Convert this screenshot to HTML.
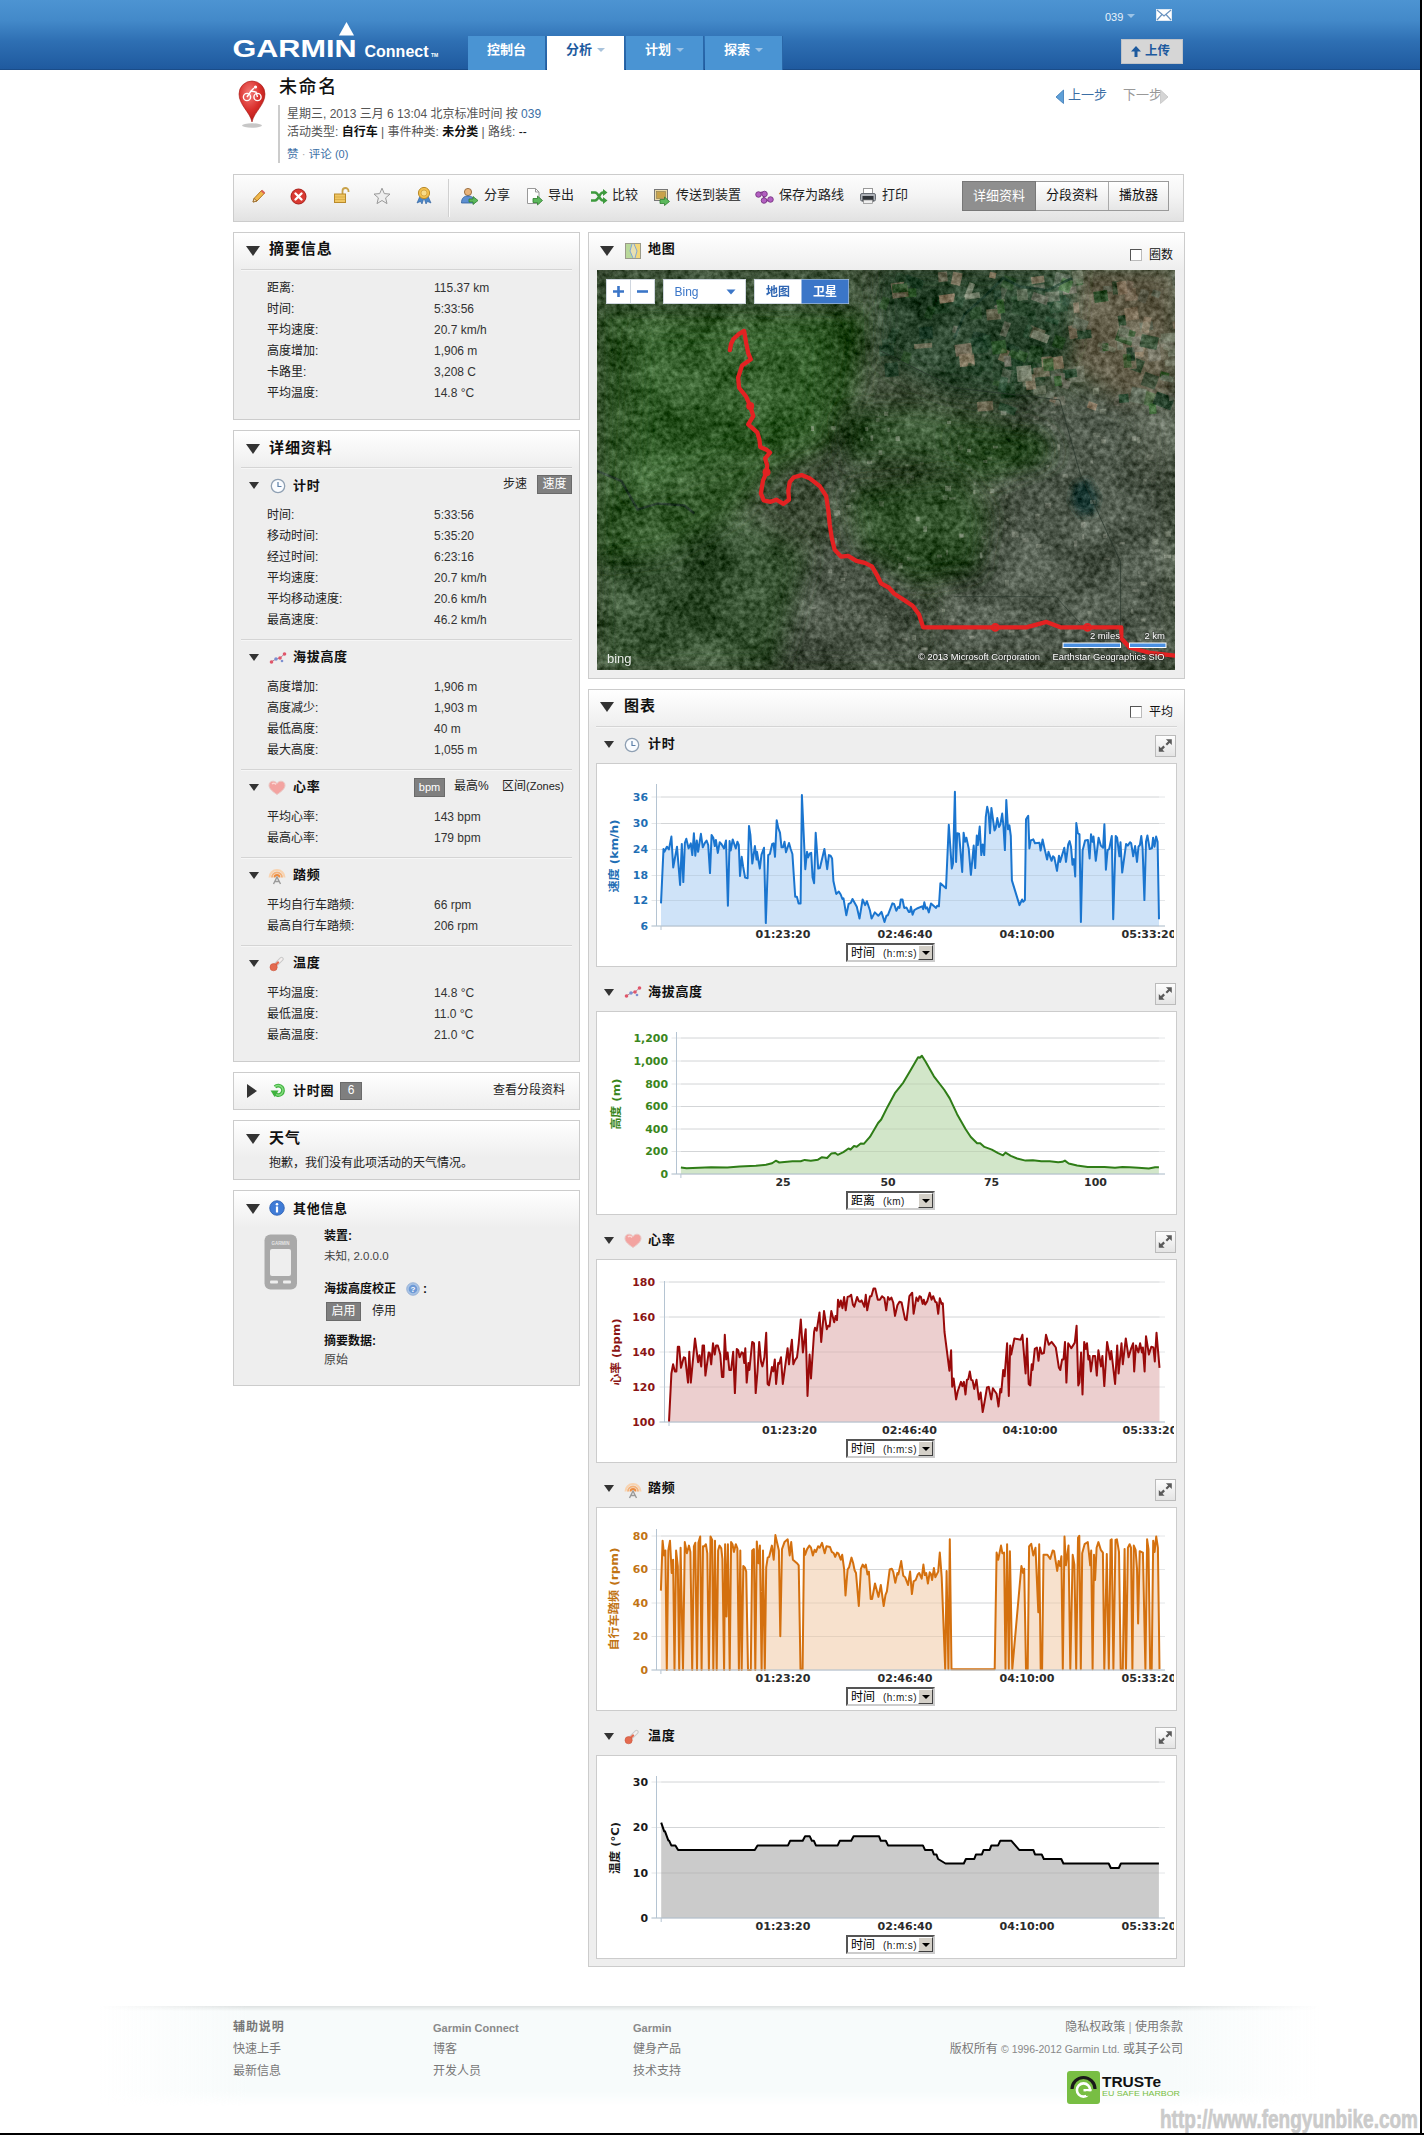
<!DOCTYPE html>
<html lang="zh-CN">
<head>
<meta charset="utf-8">
<title>Garmin Connect - 未命名</title>
<style>
*{box-sizing:border-box;margin:0;padding:0}
html,body{width:1424px;height:2135px;overflow:hidden;background:#fff}
body{font-family:"Liberation Sans","Noto Sans CJK SC",sans-serif;font-size:12px;color:#222;position:relative}
#page{position:absolute;left:0;top:0;width:1424px;height:2135px;overflow:hidden;background:#fff}
.abs{position:absolute}
a{color:#3b6ea5;text-decoration:none}
#hdr{position:absolute;left:0;top:0;width:1420px;height:70px;background:linear-gradient(#4d94d2 0%,#4389c9 30%,#2e6fb3 60%,#1f5a9f 100%);border-bottom:1px solid #1a4c88}
.tab{position:absolute;top:36px;height:34px;width:78px;background:#4a94d3;color:#fff;font-weight:bold;font-size:13px;line-height:28px;text-align:center;border-right:1px solid #2a67a8}
.tab.on{background:#fff;color:#1d5a9e}
.tab i{display:inline-block;width:0;height:0;border:4px solid transparent;border-top:4px solid #9cc3e6;border-bottom:0;margin-left:5px;vertical-align:2px}
.tab.on i{border-top-color:#a9c3dc}
.panel{position:absolute;background:#eee;border:1px solid #ccc}
.panel .ph{position:absolute;left:0;top:0;right:0;height:37px;background:linear-gradient(#fff,#eee)}
.h1{position:absolute;letter-spacing:0.9px;font-weight:bold;font-size:15px;color:#111;line-height:20px;white-space:nowrap}
.h2{position:absolute;letter-spacing:0.7px;font-weight:bold;font-size:13px;color:#111;line-height:18px;white-space:nowrap}
.tri{position:absolute;width:0;height:0;border-left:7px solid transparent;border-right:7px solid transparent;border-top:10px solid #333}
.tri.s{border-left-width:5px;border-right-width:5px;border-top-width:7px}
.trir{position:absolute;width:0;height:0;border-top:7px solid transparent;border-bottom:7px solid transparent;border-left:10px solid #333}
.sep{position:absolute;height:1px;background:#d4d4d4;border-bottom:1px solid #f6f6f6;box-sizing:content-box}
.row{position:absolute;left:34px;width:300px;height:16px;line-height:16px;font-size:12px;color:#222;white-space:nowrap}
.row b{position:absolute;left:167px;font-weight:normal;color:#333}
.tag{position:absolute;background:#7f7f7f;color:#fff;font-size:12px;line-height:18px;height:19px;text-align:center;border:1px solid #6a6a6a}
.t{position:absolute;white-space:nowrap;line-height:16px}
.cbox{position:absolute;left:8px;width:581px;height:204px;background:#fff;border:1px solid #ccc}
.exp{position:absolute;left:566px;width:21px;height:22px;background:linear-gradient(#fdfdfd,#e4e4e4);border:1px solid #bbb}
.dd{position:absolute;left:258px;width:89px;height:19px;background:#fff;border:2px solid #555;border-right-color:#ccc;border-bottom-color:#ccc;font-size:12px;line-height:16px;padding-left:3px;white-space:nowrap;color:#000}
.dd small{font-size:10px;margin-left:8px;color:#222;letter-spacing:0.4px}
.dd u{position:absolute;right:0;top:0;width:15px;height:15px;background:#d4d0c8;border:1px solid #fff;border-right-color:#404040;border-bottom-color:#404040;text-decoration:none}
.dd u:after{content:"";position:absolute;left:3px;top:5px;border:4px solid transparent;border-top:4px solid #000;border-bottom:0}
.ft{position:absolute;font-size:11px;color:#666;white-space:nowrap;line-height:14px}
.chk{position:absolute;width:12px;height:12px;background:#fff;border:1px solid #555;border-right-color:#bbb;border-bottom-color:#bbb}
svg text{font-family:"DejaVu Sans","Noto Sans CJK SC",sans-serif}
</style>
</head>
<body>
<div id="page">
<div id="hdr">
<svg class="abs" style="left:228px;top:18px" width="220" height="46" viewBox="0 0 220 46">
<polygon points="118.5,4 111,17.5 126,17.5" fill="#fff"/>
<text x="4.5" y="39" font-size="24" font-weight="bold" fill="#fff" textLength="124" lengthAdjust="spacingAndGlyphs" style="font-family:'Liberation Sans',sans-serif">GARMIN</text>
<text x="136.5" y="39" font-size="16" font-weight="bold" fill="#fff" textLength="64" lengthAdjust="spacingAndGlyphs" style="font-family:'Liberation Sans',sans-serif">Connect</text>
<text x="203" y="39" font-size="5" font-weight="bold" fill="#fff" style="font-family:'Liberation Sans',sans-serif">TM</text>
</svg>
<div class="tab" style="left:468px">控制台</div>
<div class="tab on" style="left:547px">分析<i></i></div>
<div class="tab" style="left:626px">计划<i></i></div>
<div class="tab" style="left:705px">探索<i></i></div>
<div class="t" style="left:1105px;top:9px;color:#e8f1fa;font-size:11px">039</div>
<div class="abs" style="left:1127px;top:14px;width:0;height:0;border:4px solid transparent;border-top:4px solid #9cc3e6;border-bottom:0"></div>
<svg class="abs" style="left:1156px;top:9px" width="16" height="12" viewBox="0 0 16 12"><rect x="0.5" y="0.5" width="15" height="11" fill="#fff" stroke="#dfe9f3"/><path d="M1 1 L8 7 L15 1 M1 11 L6 5.5 M15 11 L10 5.5" stroke="#6a93c0" stroke-width="1.2" fill="none"/></svg>
<div class="abs" style="left:1121px;top:39px;width:62px;height:25px;background:#d6d6d6;border:1px solid #bfc3c8;color:#1d5a9e;font-weight:bold;font-size:12.5px;line-height:22px;padding-left:23px">上传</div>
<svg class="abs" style="left:1130px;top:45px" width="12" height="13" viewBox="0 0 12 13"><path d="M6 1 L1 6.5 H4.5 V12 H7.5 V6.5 H11 Z" fill="#1d5a9e"/></svg>
</div>
<svg class="abs" style="left:234px;top:78px" width="36" height="52" viewBox="0 0 36 52">
<defs><radialGradient id="pg" cx="40%" cy="30%" r="75%"><stop offset="0" stop-color="#f47c78"/><stop offset="0.55" stop-color="#d9302c"/><stop offset="1" stop-color="#b01713"/></radialGradient></defs>
<ellipse cx="18" cy="47.5" rx="10" ry="2.2" fill="#999" opacity="0.55"/>
<path d="M18 44 C16 34 5 27 5 16 A13 13 0 0 1 31 16 C31 27 20 34 18 44Z" fill="url(#pg)" stroke="#a51a16" stroke-width="0.6"/>
<circle cx="13" cy="19" r="3.6" fill="none" stroke="#fff" stroke-width="1.4"/><circle cx="23.5" cy="19" r="3.6" fill="none" stroke="#fff" stroke-width="1.4"/>
<path d="M13 19 L17 13 L22 14 L23.5 19 M17 13 L20 10" stroke="#fff" stroke-width="1.4" fill="none"/><circle cx="21.5" cy="9" r="1.6" fill="#fff"/>
</svg>
<div class="t" style="left:279px;top:74px;font-size:18px;line-height:26px;font-weight:500;color:#111;letter-spacing:1.6px">未命名</div>
<div class="abs" style="left:278px;top:105px;width:2px;height:58px;background:#ccc"></div>
<div class="t" style="left:287px;top:106px;color:#555">星期三, 2013 三月 6 13:04 北京标准时间 按 <a>039</a></div>
<div class="t" style="left:287px;top:124px;color:#555">活动类型: <b style="color:#111">自行车</b> | 事件种类: <b style="color:#111">未分类</b> | 路线: <span style="color:#111">--</span></div>
<div class="t" style="left:287px;top:146px;color:#3b6ea5;font-size:11.5px">赞 <span style="color:#aaa">·</span> 评论 <span style="font-size:11px">(0)</span></div>
<svg class="abs" style="left:1055px;top:89px" width="10" height="15" viewBox="0 0 10 15"><path d="M8.5 1 L1 8 L8.5 14.5Z" fill="#5fa0d8" stroke="#3b78b5" stroke-width="0.8"/></svg>
<div class="t" style="left:1068px;top:87px;font-size:13px;color:#3b6ea5">上一步</div>
<div class="t" style="left:1123px;top:87px;font-size:13px;color:#999">下一步</div>
<svg class="abs" style="left:1159px;top:89px" width="10" height="15" viewBox="0 0 10 15"><path d="M1.5 1 L9 8 L1.5 14.5Z" fill="#d5d5d5" stroke="#c4c4c4" stroke-width="0.8"/></svg>
<div class="abs" style="left:233px;top:174px;width:951px;height:48px;border:1px solid #ccc;background:linear-gradient(#fdfdfd,#f4f4f4 45%,#e2e2e2)"></div>
<div class="abs" style="left:448px;top:179px;width:1px;height:38px;background:#d0d0d0;border-right:1px solid #fafafa;box-sizing:content-box"></div>
<!-- pencil -->
<svg class="abs" style="left:250px;top:188px" width="17" height="17" viewBox="0 0 17 17"><path d="M3 14 L4 10.5 L11.5 2.5 L14.5 5.2 L7 13 Z" fill="#f2b84b" stroke="#a86f1a" stroke-width="0.9"/><path d="M3 14 L4 10.5 L7 13Z" fill="#f6dfb8" stroke="#8a5a1a" stroke-width="0.7"/><path d="M11.5 2.5 L14.5 5.2" stroke="#d8605a" stroke-width="2"/></svg>
<!-- red x -->
<svg class="abs" style="left:290px;top:188px" width="17" height="17" viewBox="0 0 17 17"><circle cx="8.5" cy="8.5" r="7.5" fill="#d93a32" stroke="#a81e18"/><path d="M5.5 5.5 L11.5 11.5 M11.5 5.5 L5.5 11.5" stroke="#fff" stroke-width="2.4" stroke-linecap="round"/></svg>
<!-- lock -->
<svg class="abs" style="left:333px;top:186px" width="18" height="18" viewBox="0 0 18 18"><path d="M9.5 8 V5 A3 3 0 0 1 15.5 5 V6" fill="none" stroke="#c9a24a" stroke-width="1.8"/><rect x="1.5" y="8" width="11" height="8.5" fill="#f0c662" stroke="#b98a2a"/><path d="M2 11 H12 M2 13.5 H12" stroke="#d4a843" stroke-width="0.8"/></svg>
<!-- star -->
<svg class="abs" style="left:373px;top:187px" width="18" height="18" viewBox="0 0 18 18"><path d="M9 1.2 L11.3 6.6 L17 7.1 L12.6 10.9 L14 16.6 L9 13.5 L4 16.6 L5.4 10.9 L1 7.1 L6.7 6.6Z" fill="#eee" stroke="#999" stroke-width="1"/></svg>
<!-- ribbon -->
<svg class="abs" style="left:415px;top:186px" width="18" height="19" viewBox="0 0 18 19"><path d="M5 10 L2 17 L5.5 15.5 L7 18 L9 12 L11 18 L12.500 15.500 L16 17 L13 10Z" fill="#4a86c8" stroke="#2d5e9a" stroke-width="0.6"/><circle cx="9" cy="7" r="5.6" fill="#f3c04c" stroke="#b98a2a"/><circle cx="9" cy="7" r="3" fill="#f8dc8a" stroke="#c9993a" stroke-width="0.7"/></svg>
<!-- share -->
<svg class="abs" style="left:460px;top:187px" width="19" height="18" viewBox="0 0 19 18"><circle cx="8" cy="5" r="3.6" fill="#e8b37a" stroke="#8a5a2a" stroke-width="0.8"/><path d="M1.5 16 C1.500 11 4 9 8 9 C12 9 14.5 11 14.5 16Z" fill="#5d8fd1" stroke="#2f5f9f" stroke-width="0.8"/><path d="M9 12 H13 V9.500 L18 13.500 L13 17.500 V15 H9Z" fill="#5cb85c" stroke="#2f7d2f" stroke-width="0.8"/></svg>
<div class="t" style="left:484px;top:187px;font-size:13px;color:#222">分享</div>
<!-- export -->
<svg class="abs" style="left:526px;top:187px" width="18" height="19" viewBox="0 0 18 19"><path d="M1.5 1.500 H9.500 L13 5 V16.500 H1.500Z" fill="#fff" stroke="#999"/><path d="M9.5 1.500 V5 H13" fill="none" stroke="#999"/><path d="M7 11.500 H11.500 V9 L16.500 13.500 L11.500 18 V15.500 H7Z" fill="#5cb85c" stroke="#2f7d2f" stroke-width="0.8"/></svg>
<div class="t" style="left:548px;top:187px;font-size:13px;color:#222">导出</div>
<!-- compare -->
<svg class="abs" style="left:590px;top:188px" width="18" height="17" viewBox="0 0 18 17"><path d="M1 4.500 H5 C9 4.500 9 12.500 13 12.500 H14 M1 12.500 H5 C9 12.500 9 4.500 13 4.500 H14" fill="none" stroke="#3d9a3d" stroke-width="2.6"/><path d="M13 1 L17.500 4.500 L13 8Z M13 9 L17.500 12.500 L13 16Z" fill="#3d9a3d"/></svg>
<div class="t" style="left:612px;top:187px;font-size:13px;color:#222">比较</div>
<!-- send -->
<svg class="abs" style="left:653px;top:187px" width="18" height="19" viewBox="0 0 18 19"><rect x="1.500" y="2.500" width="13" height="11" fill="#e9d9a6" stroke="#777"/><rect x="3.500" y="4.500" width="9" height="7" fill="#c8a24a" stroke="#8a7a4a" stroke-width="0.6"/><path d="M7 12.500 H11.500 V10 L16.500 14.500 L11.500 18.500 V16.500 H7Z" fill="#5cb85c" stroke="#2f7d2f" stroke-width="0.8"/></svg>
<div class="t" style="left:676px;top:187px;font-size:13px;color:#222">传送到装置</div>
<!-- route -->
<svg class="abs" style="left:755px;top:189px" width="19" height="15" viewBox="0 0 19 15"><path d="M3.500 5 C8 1 10 5 9 7.500 C8 11 12 13 15 10.500" fill="none" stroke="#8d3f9a" stroke-width="1.6"/><circle cx="3.500" cy="5.500" r="2.800" fill="#b25fc0" stroke="#6f2a7a" stroke-width="0.8"/><circle cx="9.500" cy="5" r="2.800" fill="#b25fc0" stroke="#6f2a7a" stroke-width="0.8"/><circle cx="9" cy="11.500" r="2.800" fill="#b25fc0" stroke="#6f2a7a" stroke-width="0.8"/><circle cx="15.500" cy="10.500" r="2.800" fill="#b25fc0" stroke="#6f2a7a" stroke-width="0.800"/></svg>
<div class="t" style="left:779px;top:187px;font-size:13px;color:#222">保存为路线</div>
<!-- print -->
<svg class="abs" style="left:859px;top:187px" width="18" height="18" viewBox="0 0 18 18"><rect x="4.500" y="1.500" width="9" height="6" fill="#fff" stroke="#999"/><rect x="1.500" y="6.500" width="15" height="7.500" rx="1.500" fill="#aeb2b8" stroke="#676c73"/><rect x="3.500" y="9" width="11" height="5.500" fill="#2f3338"/><rect x="4.500" y="13" width="9" height="3.500" fill="#eee" stroke="#888" stroke-width="0.7"/></svg>
<div class="t" style="left:882px;top:187px;font-size:13px;color:#222">打印</div>
<!-- view buttons -->
<div class="abs" style="left:962px;top:181px;width:207px;height:30px;border:1px solid #9a9a9a;background:linear-gradient(#fff,#e6e6e6)"></div>
<div class="abs" style="left:962px;top:181px;width:74px;height:30px;background:#8f8f8f;border:1px solid #777;color:#fff;font-size:13px;line-height:27px;text-align:center">详细资料</div>
<div class="abs" style="left:1036px;top:182px;width:72px;height:28px;color:#111;font-size:13px;line-height:25px;text-align:center">分段资料</div>
<div class="abs" style="left:1108px;top:182px;width:1px;height:28px;background:#aaa"></div>
<div class="abs" style="left:1109px;top:182px;width:59px;height:28px;color:#111;font-size:13px;line-height:25px;text-align:center">播放器</div>
<div class="panel" style="left:233px;top:232px;width:347px;height:188px"><div class="ph" style="height:37px"></div></div>
<div class="tri" style="left:246px;top:246px"></div>
<div class="h1" style="left:269px;top:239px">摘要信息</div>
<div class="sep" style="left:241px;top:269px;width:331px"></div>
<div class="row" style="left:267px;top:280px">距离:<b>115.37 km</b></div>
<div class="row" style="left:267px;top:301px">时间:<b>5:33:56</b></div>
<div class="row" style="left:267px;top:322px">平均速度:<b>20.7 km/h</b></div>
<div class="row" style="left:267px;top:343px">高度增加:<b>1,906 m</b></div>
<div class="row" style="left:267px;top:364px">卡路里:<b>3,208 C</b></div>
<div class="row" style="left:267px;top:385px">平均温度:<b>14.8 °C</b></div>
<div class="panel" style="left:233px;top:430px;width:347px;height:632px"><div class="ph" style="height:37px"></div></div>
<div class="tri" style="left:246px;top:444px"></div>
<div class="h1" style="left:269px;top:438px">详细资料</div>
<div class="sep" style="left:241px;top:467px;width:331px"></div>
<div class="tri s" style="left:249px;top:482px"></div>
<svg class="abs" style="left:270px;top:478px" width="16" height="16" viewBox="0 0 16 16"><circle cx="8" cy="8" r="6.700" fill="#fafcff" stroke="#8fa0b3" stroke-width="1.300"/><path d="M8 4 V8.500 H11.500" fill="none" stroke="#5b7fa8" stroke-width="1.200"/></svg>
<div class="h2" style="left:293px;top:476.5px">计时</div>
<div class="t" style="left:503px;top:476px;color:#222">步速</div>
<div class="tag" style="left:537px;top:475px;width:35px;height:19px;line-height:16px">速度</div>
<div class="row" style="left:267px;top:507px">时间:<b>5:33:56</b></div>
<div class="row" style="left:267px;top:528px">移动时间:<b>5:35:20</b></div>
<div class="row" style="left:267px;top:549px">经过时间:<b>6:23:16</b></div>
<div class="row" style="left:267px;top:570px">平均速度:<b>20.7 km/h</b></div>
<div class="row" style="left:267px;top:591px">平均移动速度:<b>20.6 km/h</b></div>
<div class="row" style="left:267px;top:612px">最高速度:<b>46.2 km/h</b></div>
<div class="sep" style="left:241px;top:639px;width:331px"></div>
<div class="tri s" style="left:249px;top:654px"></div>
<svg class="abs" style="left:269px;top:651px" width="18" height="14" viewBox="0 0 18 14"><path d="M2 11 L7 8 L11 7 L16 2.500" fill="none" stroke="#b58a9a" stroke-width="1"/><circle cx="2.500" cy="11" r="1.800" fill="#e0566a"/><circle cx="7" cy="8" r="1.800" fill="#7d8fd0"/><circle cx="11" cy="7" r="1.800" fill="#e0566a"/><circle cx="15.500" cy="3" r="1.800" fill="#e0566a"/><circle cx="13" cy="10" r="1.300" fill="#7d8fd0"/></svg>
<div class="h2" style="left:293px;top:647.5px">海拔高度</div>
<div class="row" style="left:267px;top:679px">高度增加:<b>1,906 m</b></div>
<div class="row" style="left:267px;top:700px">高度减少:<b>1,903 m</b></div>
<div class="row" style="left:267px;top:721px">最低高度:<b>40 m</b></div>
<div class="row" style="left:267px;top:742px">最大高度:<b>1,055 m</b></div>
<div class="sep" style="left:241px;top:769px;width:331px"></div>
<div class="tri s" style="left:249px;top:784px"></div>
<svg class="abs" style="left:268px;top:780px" width="18" height="16" viewBox="0 0 18 16"><path d="M9 14.500 C3 10.500 1 8 1 5.200 C1 2.800 2.800 1.200 5 1.200 C6.800 1.200 8.200 2.200 9 3.600 C9.800 2.200 11.200 1.200 13 1.200 C15.200 1.200 17 2.800 17 5.200 C17 8 15 10.500 9 14.500Z" fill="#f3a3a0" stroke="#e9c7c4" stroke-width="1"/><path d="M4 4 C5 3 7 3 8 4.500" fill="none" stroke="#fbd5d2" stroke-width="1.500"/></svg>
<div class="h2" style="left:293px;top:777.5px">心率</div>
<div class="tag" style="left:414px;top:778px;width:31px;height:19px;line-height:16px"><span style="font-size:11px">bpm</span></div>
<div class="t" style="left:454px;top:778px;color:#222">最高%</div>
<div class="t" style="left:502px;top:778px;color:#222">区间<span style="font-size:11px">(Zones)</span></div>
<div class="row" style="left:267px;top:809px">平均心率:<b>143 bpm</b></div>
<div class="row" style="left:267px;top:830px">最高心率:<b>179 bpm</b></div>
<div class="sep" style="left:241px;top:857px;width:331px"></div>
<div class="tri s" style="left:249px;top:872px"></div>
<svg class="abs" style="left:268px;top:867px" width="18" height="18" viewBox="0 0 18 18"><path d="M1.500 10.500 A7.500 7.500 0 0 1 16.500 10.500" fill="none" stroke="#f8d3b0" stroke-width="2"/><path d="M4 10.500 A5 5 0 0 1 14 10.500" fill="none" stroke="#f4b27a" stroke-width="2"/><path d="M6.500 10.500 A2.500 2.500 0 0 1 11.500 10.500" fill="none" stroke="#ee8b3c" stroke-width="1.800"/><path d="M5.500 17 L9 10 L12.500 17 M7 14.500 H11" fill="none" stroke="#9a9a9a" stroke-width="1.400"/></svg>
<div class="h2" style="left:293px;top:865.5px">踏频</div>
<div class="row" style="left:267px;top:897px">平均自行车踏频:<b>66 rpm</b></div>
<div class="row" style="left:267px;top:918px">最高自行车踏频:<b>206 rpm</b></div>
<div class="sep" style="left:241px;top:945px;width:331px"></div>
<div class="tri s" style="left:249px;top:960px"></div>
<svg class="abs" style="left:269px;top:956px" width="16" height="16" viewBox="0 0 16 16"><path d="M5 10.500 L12.500 3" stroke="#c9c9c9" stroke-width="4.400" stroke-linecap="round"/><path d="M5 10.500 L12.500 3" stroke="#f4efee" stroke-width="2.400" stroke-linecap="round"/><path d="M4.500 11 L9 6.500" stroke="#e46a4f" stroke-width="2.400" stroke-linecap="round"/><circle cx="4.600" cy="11.200" r="3.600" fill="#e46a4f" stroke="#c9553c" stroke-width="0.600"/></svg>
<div class="h2" style="left:293px;top:953.5px">温度</div>
<div class="row" style="left:267px;top:985px">平均温度:<b>14.8 °C</b></div>
<div class="row" style="left:267px;top:1006px">最低温度:<b>11.0 °C</b></div>
<div class="row" style="left:267px;top:1027px">最高温度:<b>21.0 °C</b></div>
<div class="panel" style="left:233px;top:1072px;width:347px;height:38px"><div class="ph" style="height:36px"></div></div>
<div class="trir" style="left:247px;top:1084px"></div>
<svg class="abs" style="left:270px;top:1082px" width="17" height="17" viewBox="0 0 17 17"><path d="M5 4.800 A4.800 4.800 0 1 1 4.400 11.200" fill="none" stroke="#3fb23f" stroke-width="3.800"/><path d="M5 4.800 A4.800 4.800 0 1 1 4.400 11.200" fill="none" stroke="#86dc80" stroke-width="1.400"/><path d="M0.600 8.600 H8.600 L4.600 15Z" fill="#3fb23f"/></svg>
<div class="h2" style="left:293px;top:1081.5px">计时圈</div>
<div class="tag" style="left:340px;top:1082px;width:22px;height:18px;line-height:15px">6</div>
<div class="t" style="left:493px;top:1082px;color:#222">查看分段资料</div>
<div class="panel" style="left:233px;top:1120px;width:347px;height:60px"><div class="ph" style="height:37px"></div></div>
<div class="tri" style="left:246px;top:1134px"></div>
<div class="h1" style="left:269px;top:1128px">天气</div>
<div class="t" style="left:269px;top:1155px;color:#222">抱歉，我们没有此项活动的天气情况。</div>
<div class="panel" style="left:233px;top:1190px;width:347px;height:196px"><div class="ph" style="height:37px"></div></div>
<div class="tri" style="left:246px;top:1204px"></div>
<svg class="abs" style="left:269px;top:1200px" width="16" height="16" viewBox="0 0 16 16"><circle cx="8" cy="8" r="7.300" fill="#3f7bd6" stroke="#2a5db0" stroke-width="0.800"/><circle cx="8" cy="4.300" r="1.300" fill="#fff"/><rect x="6.900" y="6.500" width="2.200" height="6" fill="#fff"/></svg>
<div class="h2" style="left:293px;top:1199.5px">其他信息</div>
<svg class="abs" style="left:264px;top:1234px" width="34" height="56" viewBox="0 0 34 56"><rect x="0.500" y="0.500" width="32.500" height="55" rx="6" fill="#a9a9a9"/><rect x="6" y="15" width="21" height="27" rx="2" fill="#eee"/><rect x="6" y="46.500" width="8" height="3" rx="1" fill="#eee"/><rect x="19" y="46.500" width="8" height="3" rx="1" fill="#eee"/><text x="16.500" y="11" font-size="4.500" font-weight="bold" text-anchor="middle" fill="#e4e4e4" style="font-family:'Liberation Sans',sans-serif">GARMIN</text></svg>
<div class="t" style="left:324px;top:1228px;color:#111"><b>装置:</b></div>
<div class="t" style="left:324px;top:1248px;color:#444;font-size:11.500px">未知, 2.0.0.0</div>
<div class="t" style="left:324px;top:1281px;color:#111"><b>海拔高度校正</b></div>
<svg class="abs" style="left:406px;top:1282px" width="14" height="14" viewBox="0 0 14 14"><circle cx="7" cy="7" r="6.300" fill="#a9c4e6" stroke="#8eaad0" stroke-width="0.800"/><circle cx="7" cy="7" r="4.300" fill="#6f9ad6"/><text x="7" y="10" font-size="8" font-weight="bold" text-anchor="middle" fill="#fff" style="font-family:'Liberation Sans',sans-serif">?</text></svg>
<div class="t" style="left:423px;top:1281px;color:#111"><b>:</b></div>
<div class="tag" style="left:326px;top:1302px;width:35px;height:19px;line-height:16px">启用</div>
<div class="t" style="left:372px;top:1303px;color:#222">停用</div>
<div class="t" style="left:324px;top:1333px;color:#111"><b>摘要数据:</b></div>
<div class="t" style="left:324px;top:1352px;color:#444">原始</div>
<div class="panel" style="left:588px;top:232px;width:597px;height:447px"><div class="ph" style="height:37px"></div></div>
<div class="tri" style="left:600px;top:246px"></div>
<svg class="abs" style="left:625px;top:243px" width="16" height="16" viewBox="0 0 16 16"><rect x="0.500" y="0.500" width="15" height="15" fill="#e8e0b0" stroke="#9a9a8a"/><path d="M1 1 H7 L5 8 L8 15 H1Z" fill="#b9d89a"/><path d="M9 1 L12 8 L10 15 H15 V1Z" fill="#f3d87a"/><path d="M7 1 L5 8 L8 15 M9 1 L12 8 L10 15" fill="none" stroke="#7fa6d8" stroke-width="1"/></svg>
<div class="h2" style="left:648px;top:240px">地图</div>
<div class="chk" style="left:1130px;top:249px"></div><div class="t" style="left:1149px;top:247px;color:#111">圈数</div>
<svg class="abs" style="left:597px;top:270px" width="578" height="400" viewBox="597 270 578 400">
<defs>
<filter id="b1" x="-20%" y="-20%" width="140%" height="140%"><feGaussianBlur stdDeviation="10"/></filter>
<filter id="b2" x="-20%" y="-20%" width="140%" height="140%"><feGaussianBlur stdDeviation="3"/></filter>
<filter id="b3" x="-20%" y="-20%" width="140%" height="140%"><feGaussianBlur stdDeviation="0.700"/></filter>
<filter id="tex" x="0" y="0" width="100%" height="100%" color-interpolation-filters="sRGB"><feTurbulence type="fractalNoise" baseFrequency="0.18" numOctaves="4" seed="7" result="n"/><feColorMatrix in="n" type="matrix" values="1 0 0 0 0  1 0 0 0 0  1 0 0 0 0  0 0 0 0 1" result="g"/><feComposite in="SourceGraphic" in2="g" operator="arithmetic" k1="0" k2="1" k3="0.42" k4="-0.23" result="r1"/><feTurbulence type="fractalNoise" baseFrequency="0.022" numOctaves="3" seed="21" result="n2"/><feColorMatrix in="n2" type="matrix" values="0 1 0 0 0  0 1 0 0 0  0 1 0 0 0  0 0 0 0 1" result="g2"/><feComposite in="r1" in2="g2" operator="arithmetic" k1="0" k2="1" k3="0.3" k4="-0.165"/></filter>
<clipPath id="mc"><rect x="597" y="270" width="578" height="400"/></clipPath>
</defs>
<g clip-path="url(#mc)">
<g filter="url(#tex)">
<rect x="597" y="270" width="578" height="400" fill="#46543f"/>
<polygon points="1007.0,403.9 1175.0,375.5 1175.0,669.8 921.7,669.8 938.0,590.7 994.8,517.6" fill="#566152" filter="url(#b1)" opacity="1"/>
<polygon points="1076.0,270.0 1175.0,270.0 1175.0,403.9 1124.7,403.9 1067.8,363.4" fill="#716c59" filter="url(#b1)" opacity="1"/>
<polygon points="1124.7,403.9 1175.0,403.9 1175.0,481.1 1132.8,481.1" fill="#5b6556" filter="url(#b1)" opacity="1"/>
<polygon points="759.4,594.7 848.7,521.7 921.7,586.6 929.8,669.8 759.4,669.8" fill="#535d50" filter="url(#b1)" opacity="1"/>
<polygon points="824.3,440.5 864.9,424.2 856.8,497.3 824.3,513.5" fill="#4d5a49" filter="url(#b1)" opacity="0.9"/>
<polygon points="597.0,481.1 743.1,513.5 808.1,554.1 775.6,669.8 597.0,669.8" fill="#3e5937" filter="url(#b1)" opacity="1"/>
<polygon points="597.0,294.4 661.9,294.4 868.9,310.6 856.8,391.8 824.3,448.6 775.6,468.9 735.0,513.5 661.9,554.1 597.0,562.2" fill="#3a6130" filter="url(#b1)" opacity="1"/>
<polygon points="637.6,326.8 832.4,326.8 816.2,432.4 718.8,460.8 629.5,497.3" fill="#3b6630" filter="url(#b1)" opacity="0.9"/>
<polygon points="840.5,412.1 921.7,408.0 1043.5,432.4 1055.7,456.7 986.7,481.1 905.5,460.8 848.7,464.8" fill="#375632" filter="url(#b1)" opacity="1"/>
<polygon points="848.7,489.2 962.3,472.9 986.7,513.5 978.5,570.4 913.6,582.5 856.8,546.0" fill="#34542d" filter="url(#b1)" opacity="1"/>
<polygon points="946.1,432.4 1039.4,440.5 1043.5,460.8 978.5,472.9" fill="#31522b" filter="url(#b1)" opacity="0.8"/>
<polygon points="877.1,270.0 1076.0,270.0 1067.8,351.2 1019.1,399.9 946.1,391.8 881.1,359.3" fill="#354f39" filter="url(#b1)" opacity="1"/>
<polygon points="597.0,270.0 864.9,270.0 856.8,306.5 597.0,310.6" fill="#42593c" filter="url(#b1)" opacity="1"/>
<polygon points="1073.9,485.1 1088.1,479.0 1098.3,497.3 1094.2,513.5 1080.0,515.6 1071.1,501.4" fill="#23403b" filter="url(#b2)" opacity="1"/>
<g filter="url(#b3)">
<rect x="1011.8" y="347.3" width="17.7" height="10.2" fill="#3f6a3a" opacity="0.63" transform="rotate(20 1011.8 347.3)"/>
<rect x="1064.7" y="379.4" width="6.9" height="8.3" fill="#77786a" opacity="0.79" transform="rotate(20 1064.7 379.4)"/>
<rect x="1164.5" y="360.2" width="13.7" height="6.7" fill="#848c78" opacity="0.58" transform="rotate(-8 1164.5 360.2)"/>
<rect x="933.7" y="303.4" width="6.1" height="10.1" fill="#30533a" opacity="0.76" transform="rotate(12 933.7 303.4)"/>
<rect x="1026.0" y="361.4" width="11.6" height="8.0" fill="#2b4a30" opacity="0.83" transform="rotate(12 1026.0 361.4)"/>
<rect x="1102.9" y="340.8" width="6.1" height="11.3" fill="#77786a" opacity="0.89" transform="rotate(20 1102.9 340.8)"/>
<rect x="897.0" y="272.3" width="14.6" height="7.3" fill="#2b4a30" opacity="0.74" transform="rotate(20 897.0 272.3)"/>
<rect x="1002.1" y="348.1" width="8.3" height="12.5" fill="#97866f" opacity="0.68" transform="rotate(20 1002.1 348.1)"/>
<rect x="1102.9" y="286.3" width="8.9" height="6.0" fill="#6e7968" opacity="0.62" transform="rotate(-5 1102.9 286.3)"/>
<rect x="1010.4" y="296.3" width="15.2" height="6.4" fill="#2b4a30" opacity="0.71" transform="rotate(-5 1010.4 296.3)"/>
<rect x="1167.5" y="351.8" width="18.6" height="5.1" fill="#848c78" opacity="0.81" transform="rotate(-8 1167.5 351.8)"/>
<rect x="889.6" y="290.2" width="11.4" height="5.0" fill="#274631" opacity="0.70" transform="rotate(-8 889.6 290.2)"/>
<rect x="903.9" y="350.4" width="8.8" height="11.7" fill="#355a33" opacity="0.60" transform="rotate(20 903.9 350.4)"/>
<rect x="1125.0" y="288.7" width="10.7" height="12.0" fill="#8a7d69" opacity="0.88" transform="rotate(-5 1125.0 288.7)"/>
<rect x="1093.2" y="291.9" width="13.9" height="11.2" fill="#355a33" opacity="0.90" transform="rotate(-8 1093.2 291.9)"/>
<rect x="1002.6" y="284.3" width="6.2" height="15.8" fill="#6e7968" opacity="0.65" transform="rotate(20 1002.6 284.3)"/>
<rect x="964.5" y="294.2" width="15.0" height="5.7" fill="#848c78" opacity="0.81" transform="rotate(-8 964.5 294.2)"/>
<rect x="937.8" y="272.3" width="9.2" height="9.9" fill="#8a7d69" opacity="0.66" transform="rotate(-5 937.8 272.3)"/>
<rect x="904.5" y="289.1" width="11.5" height="8.6" fill="#3f6a3a" opacity="0.78" transform="rotate(-5 904.5 289.1)"/>
<rect x="1052.8" y="397.5" width="11.8" height="8.9" fill="#77786a" opacity="0.56" transform="rotate(-8 1052.8 397.5)"/>
<rect x="1020.7" y="370.8" width="9.8" height="16.2" fill="#848c78" opacity="0.70" transform="rotate(-8 1020.7 370.8)"/>
<rect x="1145.3" y="371.7" width="14.8" height="13.9" fill="#274631" opacity="0.58" transform="rotate(20 1145.3 371.7)"/>
<rect x="1145.4" y="390.2" width="11.1" height="13.9" fill="#3f6a3a" opacity="0.56" transform="rotate(20 1145.4 390.2)"/>
<rect x="990.0" y="271.7" width="6.6" height="5.9" fill="#97866f" opacity="0.90" transform="rotate(12 990.0 271.7)"/>
<rect x="992.8" y="371.4" width="13.2" height="9.9" fill="#2b4a30" opacity="0.76" transform="rotate(-8 992.8 371.4)"/>
<rect x="969.5" y="282.1" width="6.0" height="15.8" fill="#848c78" opacity="0.81" transform="rotate(20 969.5 282.1)"/>
<rect x="953.3" y="271.6" width="9.6" height="12.6" fill="#8a7d69" opacity="0.85" transform="rotate(12 953.3 271.6)"/>
<rect x="1073.7" y="331.0" width="17.3" height="8.6" fill="#30533a" opacity="0.80" transform="rotate(-5 1073.7 331.0)"/>
<rect x="1139.3" y="323.1" width="13.3" height="8.5" fill="#6e7968" opacity="0.69" transform="rotate(-8 1139.3 323.1)"/>
<rect x="1089.0" y="401.1" width="9.3" height="6.8" fill="#97866f" opacity="0.92" transform="rotate(20 1089.0 401.1)"/>
<rect x="991.0" y="341.8" width="14.4" height="13.0" fill="#3f6a3a" opacity="0.73" transform="rotate(-8 991.0 341.8)"/>
<rect x="1124.0" y="308.4" width="13.6" height="12.6" fill="#97866f" opacity="0.67" transform="rotate(-8 1124.0 308.4)"/>
<rect x="1068.0" y="325.9" width="8.1" height="13.6" fill="#8a7d69" opacity="0.87" transform="rotate(-8 1068.0 325.9)"/>
<rect x="1010.1" y="356.9" width="14.2" height="14.0" fill="#30533a" opacity="0.63" transform="rotate(20 1010.1 356.9)"/>
<rect x="1102.0" y="343.8" width="6.2" height="7.4" fill="#3f6a3a" opacity="0.83" transform="rotate(-5 1102.0 343.8)"/>
<rect x="994.3" y="379.3" width="17.5" height="5.9" fill="#355a33" opacity="0.60" transform="rotate(20 994.3 379.3)"/>
<rect x="879.1" y="345.9" width="14.2" height="10.6" fill="#274631" opacity="0.74" transform="rotate(-5 879.1 345.9)"/>
<rect x="1114.9" y="397.5" width="7.3" height="7.6" fill="#77786a" opacity="0.94" transform="rotate(12 1114.9 397.5)"/>
<rect x="881.7" y="339.7" width="6.2" height="8.8" fill="#274631" opacity="0.74" transform="rotate(-8 881.7 339.7)"/>
<rect x="1004.9" y="274.8" width="12.6" height="12.7" fill="#355a33" opacity="0.61" transform="rotate(20 1004.9 274.8)"/>
<rect x="1158.8" y="338.0" width="18.0" height="5.8" fill="#848c78" opacity="0.77" transform="rotate(-5 1158.8 338.0)"/>
<rect x="1032.8" y="386.4" width="13.0" height="8.4" fill="#848c78" opacity="0.63" transform="rotate(-5 1032.8 386.4)"/>
<rect x="1165.6" y="342.3" width="13.1" height="7.2" fill="#848c78" opacity="0.55" transform="rotate(20 1165.6 342.3)"/>
<rect x="1030.8" y="325.3" width="16.1" height="11.3" fill="#8a7d69" opacity="0.58" transform="rotate(20 1030.8 325.3)"/>
<rect x="1000.3" y="402.1" width="17.7" height="7.9" fill="#30533a" opacity="0.69" transform="rotate(20 1000.3 402.1)"/>
<rect x="1033.5" y="285.0" width="11.1" height="5.2" fill="#77786a" opacity="0.56" transform="rotate(-5 1033.5 285.0)"/>
<rect x="944.8" y="364.8" width="9.9" height="8.9" fill="#2b4a30" opacity="0.75" transform="rotate(-8 944.8 364.8)"/>
<rect x="1130.9" y="356.0" width="15.0" height="12.8" fill="#2b4a30" opacity="0.70" transform="rotate(20 1130.9 356.0)"/>
<rect x="1122.9" y="355.0" width="12.7" height="14.7" fill="#8a7d69" opacity="0.76" transform="rotate(-5 1122.9 355.0)"/>
<rect x="1118.5" y="394.6" width="9.8" height="8.5" fill="#30533a" opacity="0.86" transform="rotate(-5 1118.5 394.6)"/>
<rect x="1141.5" y="288.5" width="8.8" height="13.1" fill="#77786a" opacity="0.72" transform="rotate(20 1141.5 288.5)"/>
<rect x="1038.9" y="367.3" width="8.3" height="12.0" fill="#2b4a30" opacity="0.63" transform="rotate(12 1038.9 367.3)"/>
<rect x="1148.6" y="403.6" width="7.2" height="10.6" fill="#3f6a3a" opacity="0.95" transform="rotate(-5 1148.6 403.6)"/>
<rect x="1116.3" y="336.5" width="6.0" height="13.5" fill="#848c78" opacity="0.74" transform="rotate(-5 1116.3 336.5)"/>
<rect x="932.0" y="298.1" width="16.6" height="16.1" fill="#2b4a30" opacity="0.78" transform="rotate(-5 932.0 298.1)"/>
<rect x="1160.5" y="333.8" width="15.6" height="8.6" fill="#848c78" opacity="0.69" transform="rotate(-5 1160.5 333.8)"/>
<rect x="1056.1" y="271.8" width="14.8" height="14.5" fill="#6e7968" opacity="0.69" transform="rotate(12 1056.1 271.8)"/>
<rect x="997.8" y="296.9" width="7.8" height="10.7" fill="#77786a" opacity="0.87" transform="rotate(20 997.8 296.9)"/>
<rect x="1046.8" y="296.4" width="13.3" height="8.7" fill="#274631" opacity="0.91" transform="rotate(-5 1046.8 296.4)"/>
<rect x="1119.8" y="326.0" width="17.3" height="14.9" fill="#355a33" opacity="0.86" transform="rotate(20 1119.8 326.0)"/>
<rect x="938.7" y="295.5" width="16.0" height="8.3" fill="#97866f" opacity="0.95" transform="rotate(-8 938.7 295.5)"/>
<rect x="1075.5" y="316.6" width="14.3" height="11.3" fill="#6e7968" opacity="0.76" transform="rotate(20 1075.5 316.6)"/>
<rect x="1068.4" y="366.8" width="15.6" height="16.0" fill="#848c78" opacity="0.59" transform="rotate(-5 1068.4 366.8)"/>
<rect x="953.5" y="325.4" width="6.3" height="7.1" fill="#77786a" opacity="0.65" transform="rotate(12 953.5 325.4)"/>
<rect x="1146.9" y="345.9" width="12.3" height="15.9" fill="#77786a" opacity="0.81" transform="rotate(-8 1146.9 345.9)"/>
<rect x="1040.8" y="362.2" width="18.1" height="9.3" fill="#355a33" opacity="0.74" transform="rotate(-5 1040.8 362.2)"/>
<rect x="1132.0" y="344.8" width="13.4" height="9.8" fill="#97866f" opacity="0.76" transform="rotate(12 1132.0 344.8)"/>
<rect x="986.0" y="309.4" width="14.2" height="11.2" fill="#97866f" opacity="0.56" transform="rotate(-5 986.0 309.4)"/>
<rect x="1051.6" y="357.4" width="11.0" height="12.6" fill="#97866f" opacity="0.85" transform="rotate(-8 1051.6 357.4)"/>
<rect x="1050.4" y="369.8" width="9.8" height="13.9" fill="#6e7968" opacity="0.65" transform="rotate(-5 1050.4 369.8)"/>
<rect x="890.6" y="283.6" width="16.2" height="15.2" fill="#8a7d69" opacity="0.79" transform="rotate(-8 890.6 283.6)"/>
<rect x="892.1" y="327.6" width="7.2" height="14.7" fill="#30533a" opacity="0.60" transform="rotate(20 892.1 327.6)"/>
<rect x="918.7" y="327.5" width="13.5" height="12.1" fill="#274631" opacity="0.86" transform="rotate(-5 918.7 327.5)"/>
<rect x="1160.9" y="371.3" width="8.8" height="6.2" fill="#3f6a3a" opacity="0.80" transform="rotate(12 1160.9 371.3)"/>
<rect x="958.9" y="354.2" width="15.1" height="12.8" fill="#97866f" opacity="0.85" transform="rotate(-5 958.9 354.2)"/>
<rect x="1160.7" y="339.3" width="14.2" height="7.1" fill="#77786a" opacity="0.55" transform="rotate(12 1160.7 339.3)"/>
<rect x="1003.7" y="356.0" width="7.0" height="11.0" fill="#77786a" opacity="0.92" transform="rotate(-5 1003.7 356.0)"/>
<rect x="1041.1" y="357.1" width="10.5" height="10.3" fill="#97866f" opacity="0.75" transform="rotate(-5 1041.1 357.1)"/>
<rect x="1126.9" y="280.3" width="7.2" height="14.1" fill="#8a7d69" opacity="0.73" transform="rotate(12 1126.9 280.3)"/>
<rect x="993.3" y="290.8" width="7.7" height="14.4" fill="#274631" opacity="0.77" transform="rotate(-5 993.3 290.8)"/>
<rect x="1004.5" y="321.0" width="6.9" height="14.8" fill="#77786a" opacity="0.72" transform="rotate(20 1004.5 321.0)"/>
<rect x="1120.0" y="334.0" width="16.4" height="5.0" fill="#848c78" opacity="0.58" transform="rotate(12 1120.0 334.0)"/>
<rect x="1024.5" y="375.5" width="9.9" height="14.9" fill="#97866f" opacity="0.70" transform="rotate(-8 1024.5 375.5)"/>
<rect x="973.1" y="330.9" width="13.4" height="15.1" fill="#274631" opacity="0.73" transform="rotate(12 973.1 330.9)"/>
<rect x="1013.6" y="300.5" width="18.3" height="13.2" fill="#2b4a30" opacity="0.69" transform="rotate(12 1013.6 300.5)"/>
<rect x="884.3" y="363.4" width="13.3" height="13.9" fill="#274631" opacity="0.87" transform="rotate(-5 884.3 363.4)"/>
<rect x="1126.2" y="347.7" width="8.0" height="13.5" fill="#274631" opacity="0.87" transform="rotate(-5 1126.2 347.7)"/>
<rect x="1030.7" y="345.1" width="13.1" height="15.9" fill="#355a33" opacity="0.58" transform="rotate(12 1030.7 345.1)"/>
<rect x="1111.9" y="281.6" width="6.7" height="13.2" fill="#2b4a30" opacity="0.56" transform="rotate(-5 1111.9 281.6)"/>
<rect x="1002.8" y="368.3" width="12.0" height="15.2" fill="#6e7968" opacity="0.71" transform="rotate(12 1002.8 368.3)"/>
<rect x="1117.6" y="316.0" width="7.5" height="10.4" fill="#2b4a30" opacity="0.83" transform="rotate(-8 1117.6 316.0)"/>
<rect x="999.4" y="384.0" width="14.3" height="14.6" fill="#2b4a30" opacity="0.91" transform="rotate(-8 999.4 384.0)"/>
<rect x="1033.1" y="368.0" width="16.1" height="9.7" fill="#8a7d69" opacity="0.65" transform="rotate(-5 1033.1 368.0)"/>
<rect x="1172.3" y="321.8" width="7.9" height="7.2" fill="#97866f" opacity="0.66" transform="rotate(-8 1172.3 321.8)"/>
<rect x="1017.5" y="370.8" width="9.6" height="6.6" fill="#2b4a30" opacity="0.85" transform="rotate(-8 1017.5 370.8)"/>
<rect x="1051.1" y="395.5" width="6.2" height="6.1" fill="#8a7d69" opacity="0.79" transform="rotate(20 1051.1 395.5)"/>
<rect x="1054.3" y="300.9" width="8.1" height="8.1" fill="#97866f" opacity="0.80" transform="rotate(20 1054.3 300.9)"/>
<rect x="1131.3" y="336.9" width="10.9" height="15.7" fill="#77786a" opacity="0.74" transform="rotate(-5 1131.3 336.9)"/>
<rect x="996.1" y="300.0" width="7.4" height="13.9" fill="#3f6a3a" opacity="0.86" transform="rotate(-8 996.1 300.0)"/>
<rect x="1073.0" y="302.8" width="5.8" height="10.2" fill="#8a7d69" opacity="0.84" transform="rotate(-5 1073.0 302.8)"/>
<rect x="1000.9" y="376.5" width="7.6" height="15.2" fill="#30533a" opacity="0.80" transform="rotate(12 1000.9 376.5)"/>
<rect x="1030.8" y="277.3" width="13.1" height="6.9" fill="#8a7d69" opacity="0.88" transform="rotate(-8 1030.8 277.3)"/>
<rect x="981.9" y="354.9" width="12.5" height="15.0" fill="#2b4a30" opacity="0.93" transform="rotate(12 981.9 354.9)"/>
<rect x="882.7" y="295.9" width="8.2" height="12.6" fill="#355a33" opacity="0.63" transform="rotate(20 882.7 295.9)"/>
<rect x="1033.7" y="291.7" width="16.5" height="8.4" fill="#77786a" opacity="0.77" transform="rotate(20 1033.7 291.7)"/>
<rect x="1075.8" y="279.3" width="6.6" height="6.5" fill="#355a33" opacity="0.85" transform="rotate(-8 1075.8 279.3)"/>
<rect x="1071.9" y="271.7" width="10.6" height="12.9" fill="#848c78" opacity="0.60" transform="rotate(-8 1071.9 271.7)"/>
<rect x="1132.1" y="386.5" width="15.0" height="15.1" fill="#6e7968" opacity="0.92" transform="rotate(12 1132.1 386.5)"/>
<rect x="1161.3" y="374.2" width="12.9" height="5.9" fill="#6e7968" opacity="0.84" transform="rotate(12 1161.3 374.2)"/>
<rect x="969.3" y="307.8" width="11.8" height="12.1" fill="#355a33" opacity="0.59" transform="rotate(-5 969.3 307.8)"/>
<rect x="1062.3" y="288.1" width="13.9" height="6.9" fill="#77786a" opacity="0.88" transform="rotate(-8 1062.3 288.1)"/>
<rect x="907.0" y="274.5" width="18.5" height="9.8" fill="#274631" opacity="0.92" transform="rotate(20 907.0 274.5)"/>
<rect x="1153.2" y="289.2" width="8.4" height="6.6" fill="#6e7968" opacity="0.68" transform="rotate(20 1153.2 289.2)"/>
<rect x="1062.7" y="370.3" width="13.6" height="8.5" fill="#30533a" opacity="0.81" transform="rotate(-8 1062.7 370.3)"/>
<rect x="954.7" y="296.0" width="9.7" height="9.9" fill="#30533a" opacity="0.75" transform="rotate(12 954.7 296.0)"/>
<rect x="1122.9" y="354.4" width="7.7" height="13.6" fill="#3f6a3a" opacity="0.64" transform="rotate(-5 1122.9 354.4)"/>
<rect x="1048.1" y="297.3" width="17.8" height="16.2" fill="#30533a" opacity="0.78" transform="rotate(-8 1048.1 297.3)"/>
<rect x="1063.9" y="297.3" width="6.8" height="7.7" fill="#274631" opacity="0.68" transform="rotate(12 1063.9 297.3)"/>
<rect x="1011.8" y="370.7" width="8.8" height="11.3" fill="#2b4a30" opacity="0.77" transform="rotate(12 1011.8 370.7)"/>
<rect x="1144.3" y="316.2" width="7.6" height="15.5" fill="#97866f" opacity="0.65" transform="rotate(12 1144.3 316.2)"/>
<rect x="1124.6" y="295.6" width="12.8" height="5.7" fill="#8a7d69" opacity="0.86" transform="rotate(-5 1124.6 295.6)"/>
<rect x="968.7" y="362.6" width="15.3" height="9.2" fill="#2b4a30" opacity="0.61" transform="rotate(20 968.7 362.6)"/>
<rect x="1016.5" y="289.7" width="10.7" height="11.3" fill="#848c78" opacity="0.60" transform="rotate(-5 1016.5 289.7)"/>
<rect x="1046.3" y="315.8" width="14.0" height="5.3" fill="#30533a" opacity="0.71" transform="rotate(20 1046.3 315.8)"/>
<rect x="1055.8" y="334.8" width="11.0" height="12.0" fill="#355a33" opacity="0.85" transform="rotate(20 1055.8 334.8)"/>
<rect x="1142.0" y="334.0" width="17.4" height="12.7" fill="#2b4a30" opacity="0.78" transform="rotate(12 1142.0 334.0)"/>
<rect x="1033.5" y="329.6" width="17.4" height="8.5" fill="#848c78" opacity="0.91" transform="rotate(20 1033.5 329.6)"/>
<rect x="1055.1" y="373.8" width="9.6" height="11.6" fill="#77786a" opacity="0.89" transform="rotate(-5 1055.1 373.8)"/>
<rect x="1026.8" y="324.7" width="6.4" height="12.8" fill="#30533a" opacity="0.77" transform="rotate(20 1026.8 324.7)"/>
<rect x="1157.2" y="391.4" width="18.7" height="13.2" fill="#274631" opacity="0.90" transform="rotate(20 1157.2 391.4)"/>
<rect x="1045.1" y="292.6" width="14.1" height="9.7" fill="#77786a" opacity="0.59" transform="rotate(-5 1045.1 292.6)"/>
<rect x="913.9" y="344.2" width="18.0" height="4.9" fill="#97866f" opacity="0.56" transform="rotate(-5 913.9 344.2)"/>
<rect x="1120.0" y="324.8" width="10.3" height="11.5" fill="#77786a" opacity="0.73" transform="rotate(12 1120.0 324.8)"/>
<rect x="968.8" y="338.8" width="17.8" height="16.0" fill="#30533a" opacity="0.63" transform="rotate(-8 968.8 338.8)"/>
<rect x="982.6" y="335.2" width="7.9" height="14.9" fill="#30533a" opacity="0.76" transform="rotate(-5 982.6 335.2)"/>
<rect x="892.0" y="284.6" width="15.1" height="8.4" fill="#355a33" opacity="0.84" transform="rotate(-5 892.0 284.6)"/>
<rect x="976.9" y="402.1" width="15.8" height="9.6" fill="#97866f" opacity="0.60" transform="rotate(-5 976.9 402.1)"/>
<rect x="1026.5" y="310.8" width="9.2" height="14.0" fill="#2b4a30" opacity="0.79" transform="rotate(-5 1026.5 310.8)"/>
<rect x="1168.2" y="393.6" width="8.0" height="7.4" fill="#77786a" opacity="0.74" transform="rotate(-8 1168.2 393.6)"/>
<rect x="1008.3" y="342.9" width="12.6" height="5.4" fill="#274631" opacity="0.76" transform="rotate(20 1008.3 342.9)"/>
<rect x="1116.4" y="282.0" width="9.4" height="13.5" fill="#97866f" opacity="0.84" transform="rotate(-8 1116.4 282.0)"/>
<rect x="1171.3" y="274.6" width="11.7" height="13.4" fill="#6e7968" opacity="0.57" transform="rotate(-8 1171.3 274.6)"/>
<rect x="1042.7" y="359.0" width="10.4" height="12.4" fill="#3f6a3a" opacity="0.67" transform="rotate(-5 1042.7 359.0)"/>
<rect x="1054.0" y="376.4" width="7.1" height="9.8" fill="#3f6a3a" opacity="0.86" transform="rotate(-5 1054.0 376.4)"/>
<rect x="954.4" y="345.1" width="16.8" height="11.7" fill="#8a7d69" opacity="0.79" transform="rotate(-8 954.4 345.1)"/>
<rect x="1047.7" y="390.5" width="8.0" height="6.6" fill="#6e7968" opacity="0.87" transform="rotate(20 1047.7 390.5)"/>
<rect x="1092.5" y="388.2" width="6.1" height="6.2" fill="#848c78" opacity="0.78" transform="rotate(-5 1092.5 388.2)"/>
<rect x="1062.7" y="277.4" width="11.2" height="12.8" fill="#3f6a3a" opacity="0.86" transform="rotate(20 1062.7 277.4)"/>
<rect x="928.2" y="305.2" width="7.8" height="12.7" fill="#355a33" opacity="0.57" transform="rotate(20 928.2 305.2)"/>
<rect x="1016.2" y="366.4" width="14.8" height="15.7" fill="#848c78" opacity="0.94" transform="rotate(-5 1016.2 366.4)"/>
<rect x="1098.9" y="342.0" width="18.5" height="4.9" fill="#848c78" opacity="0.61" transform="rotate(20 1098.9 342.0)"/>
<rect x="1012.1" y="531.5" width="6.7" height="5.9" fill="#aeb3a4" opacity="0.40"/>
<rect x="1071.2" y="663.5" width="5.1" height="3.2" fill="#aeb3a4" opacity="0.24"/>
<rect x="1121.9" y="517.5" width="2.4" height="2.9" fill="#aeb3a4" opacity="0.29"/>
<rect x="1155.3" y="649.7" width="3.1" height="2.6" fill="#aeb3a4" opacity="0.38"/>
<rect x="1173.1" y="601.1" width="4.8" height="5.6" fill="#aeb3a4" opacity="0.47"/>
<rect x="1147.1" y="454.4" width="6.3" height="5.7" fill="#aeb3a4" opacity="0.26"/>
<rect x="947.0" y="420.9" width="4.1" height="3.0" fill="#aeb3a4" opacity="0.44"/>
<rect x="1103.1" y="533.7" width="4.0" height="4.4" fill="#aeb3a4" opacity="0.43"/>
<rect x="981.5" y="536.3" width="5.1" height="2.7" fill="#aeb3a4" opacity="0.35"/>
<rect x="1006.3" y="517.7" width="2.2" height="3.1" fill="#aeb3a4" opacity="0.48"/>
<rect x="1035.9" y="543.9" width="5.7" height="4.0" fill="#aeb3a4" opacity="0.37"/>
<rect x="1046.4" y="465.0" width="2.5" height="2.2" fill="#aeb3a4" opacity="0.42"/>
<rect x="1093.1" y="443.9" width="3.2" height="5.4" fill="#aeb3a4" opacity="0.24"/>
<rect x="1174.3" y="627.6" width="4.2" height="5.4" fill="#aeb3a4" opacity="0.31"/>
<rect x="902.1" y="638.0" width="5.3" height="3.2" fill="#aeb3a4" opacity="0.38"/>
<rect x="987.3" y="457.2" width="4.6" height="2.5" fill="#aeb3a4" opacity="0.26"/>
<rect x="958.8" y="533.3" width="5.5" height="4.1" fill="#aeb3a4" opacity="0.36"/>
<rect x="923.2" y="526.3" width="3.9" height="5.5" fill="#aeb3a4" opacity="0.45"/>
<rect x="1004.4" y="525.6" width="2.7" height="4.1" fill="#aeb3a4" opacity="0.31"/>
<rect x="845.7" y="505.0" width="5.1" height="2.6" fill="#aeb3a4" opacity="0.45"/>
<rect x="1082.2" y="534.4" width="2.1" height="5.0" fill="#aeb3a4" opacity="0.42"/>
<rect x="1050.4" y="425.5" width="6.3" height="4.2" fill="#aeb3a4" opacity="0.31"/>
<rect x="852.9" y="610.8" width="3.9" height="5.1" fill="#aeb3a4" opacity="0.28"/>
<rect x="1101.4" y="439.4" width="4.5" height="4.0" fill="#aeb3a4" opacity="0.48"/>
<rect x="912.5" y="592.1" width="3.1" height="5.7" fill="#aeb3a4" opacity="0.26"/>
<rect x="1090.0" y="499.8" width="5.6" height="4.1" fill="#aeb3a4" opacity="0.42"/>
<rect x="1141.1" y="618.5" width="4.4" height="3.0" fill="#aeb3a4" opacity="0.46"/>
<rect x="921.3" y="647.4" width="6.5" height="2.5" fill="#aeb3a4" opacity="0.47"/>
<rect x="1142.9" y="479.2" width="3.9" height="5.4" fill="#aeb3a4" opacity="0.29"/>
<rect x="1072.0" y="640.0" width="2.4" height="2.1" fill="#aeb3a4" opacity="0.30"/>
<rect x="945.0" y="485.8" width="6.1" height="5.5" fill="#aeb3a4" opacity="0.39"/>
<rect x="949.1" y="497.4" width="6.5" height="2.1" fill="#aeb3a4" opacity="0.41"/>
<rect x="887.5" y="427.8" width="2.2" height="4.2" fill="#aeb3a4" opacity="0.38"/>
<rect x="831.4" y="425.9" width="4.3" height="3.8" fill="#aeb3a4" opacity="0.49"/>
<rect x="949.3" y="618.4" width="5.4" height="3.1" fill="#aeb3a4" opacity="0.35"/>
<rect x="981.6" y="413.5" width="5.0" height="3.1" fill="#aeb3a4" opacity="0.28"/>
<rect x="888.8" y="544.3" width="6.6" height="5.9" fill="#aeb3a4" opacity="0.20"/>
<rect x="1008.8" y="630.3" width="5.8" height="2.3" fill="#aeb3a4" opacity="0.45"/>
<rect x="1132.5" y="588.9" width="6.0" height="3.1" fill="#aeb3a4" opacity="0.23"/>
<rect x="815.2" y="618.9" width="3.0" height="3.6" fill="#aeb3a4" opacity="0.25"/>
<rect x="878.6" y="450.2" width="3.7" height="4.8" fill="#aeb3a4" opacity="0.44"/>
<rect x="915.8" y="516.6" width="3.8" height="4.7" fill="#aeb3a4" opacity="0.35"/>
<rect x="1045.2" y="502.8" width="5.5" height="5.7" fill="#aeb3a4" opacity="0.42"/>
<rect x="1130.0" y="667.0" width="6.1" height="5.5" fill="#aeb3a4" opacity="0.29"/>
<rect x="1119.6" y="542.1" width="5.4" height="2.2" fill="#aeb3a4" opacity="0.39"/>
<rect x="959.5" y="534.2" width="3.7" height="3.6" fill="#aeb3a4" opacity="0.42"/>
<rect x="1062.6" y="474.2" width="5.2" height="3.5" fill="#aeb3a4" opacity="0.40"/>
<rect x="875.4" y="632.1" width="3.0" height="4.3" fill="#aeb3a4" opacity="0.24"/>
<rect x="1168.9" y="575.9" width="2.6" height="5.0" fill="#aeb3a4" opacity="0.28"/>
<rect x="867.1" y="460.6" width="5.1" height="3.2" fill="#aeb3a4" opacity="0.40"/>
<rect x="1165.4" y="531.5" width="5.5" height="5.2" fill="#aeb3a4" opacity="0.48"/>
<rect x="906.4" y="479.0" width="3.3" height="4.7" fill="#aeb3a4" opacity="0.32"/>
<rect x="1057.3" y="444.3" width="2.8" height="6.0" fill="#aeb3a4" opacity="0.46"/>
<rect x="879.2" y="501.3" width="4.7" height="5.2" fill="#aeb3a4" opacity="0.32"/>
<rect x="1140.0" y="626.0" width="6.3" height="2.7" fill="#aeb3a4" opacity="0.22"/>
<rect x="969.1" y="635.7" width="5.2" height="2.9" fill="#aeb3a4" opacity="0.42"/>
<rect x="957.8" y="445.2" width="4.9" height="4.7" fill="#aeb3a4" opacity="0.26"/>
<rect x="911.8" y="634.9" width="4.2" height="5.3" fill="#aeb3a4" opacity="0.37"/>
<rect x="1137.1" y="638.5" width="4.2" height="2.6" fill="#aeb3a4" opacity="0.47"/>
<rect x="907.2" y="556.9" width="3.4" height="3.6" fill="#aeb3a4" opacity="0.30"/>
<rect x="837.8" y="460.7" width="4.8" height="4.2" fill="#aeb3a4" opacity="0.25"/>
<rect x="810.7" y="607.1" width="5.4" height="2.0" fill="#aeb3a4" opacity="0.30"/>
<rect x="859.3" y="614.6" width="7.0" height="3.6" fill="#aeb3a4" opacity="0.21"/>
<rect x="937.0" y="554.6" width="4.8" height="2.9" fill="#aeb3a4" opacity="0.39"/>
<rect x="1111.6" y="474.1" width="2.9" height="3.2" fill="#aeb3a4" opacity="0.27"/>
<rect x="1103.5" y="557.6" width="6.7" height="2.2" fill="#aeb3a4" opacity="0.46"/>
<rect x="1154.7" y="549.1" width="5.4" height="3.1" fill="#aeb3a4" opacity="0.21"/>
<rect x="1012.0" y="424.5" width="4.3" height="5.5" fill="#aeb3a4" opacity="0.22"/>
<rect x="941.8" y="608.8" width="3.3" height="3.0" fill="#aeb3a4" opacity="0.48"/>
<rect x="989.7" y="488.6" width="4.7" height="4.7" fill="#aeb3a4" opacity="0.44"/>
<rect x="1089.9" y="653.1" width="4.4" height="5.4" fill="#aeb3a4" opacity="0.32"/>
<rect x="1137.9" y="571.3" width="2.0" height="2.6" fill="#aeb3a4" opacity="0.30"/>
<rect x="1073.8" y="540.5" width="3.4" height="6.0" fill="#aeb3a4" opacity="0.39"/>
<rect x="973.1" y="489.7" width="2.3" height="4.6" fill="#aeb3a4" opacity="0.38"/>
<rect x="905.2" y="463.9" width="2.9" height="2.2" fill="#aeb3a4" opacity="0.24"/>
<rect x="919.8" y="461.9" width="3.7" height="2.6" fill="#aeb3a4" opacity="0.31"/>
<rect x="875.0" y="413.8" width="4.0" height="2.2" fill="#aeb3a4" opacity="0.23"/>
<rect x="1156.9" y="627.9" width="5.8" height="2.1" fill="#aeb3a4" opacity="0.25"/>
<rect x="832.5" y="562.2" width="4.9" height="3.3" fill="#aeb3a4" opacity="0.34"/>
<rect x="1152.5" y="538.7" width="5.9" height="5.6" fill="#aeb3a4" opacity="0.44"/>
<rect x="833.7" y="510.1" width="6.6" height="5.5" fill="#aeb3a4" opacity="0.43"/>
<rect x="1000.7" y="410.6" width="5.7" height="4.6" fill="#aeb3a4" opacity="0.47"/>
<rect x="828.4" y="569.4" width="3.7" height="3.8" fill="#aeb3a4" opacity="0.41"/>
<rect x="963.6" y="661.8" width="6.6" height="2.5" fill="#aeb3a4" opacity="0.42"/>
<rect x="1081.1" y="522.2" width="4.3" height="5.3" fill="#aeb3a4" opacity="0.35"/>
<rect x="945.8" y="549.7" width="2.2" height="5.7" fill="#aeb3a4" opacity="0.36"/>
<rect x="973.8" y="482.4" width="2.2" height="2.2" fill="#aeb3a4" opacity="0.30"/>
<rect x="1005.1" y="493.9" width="3.3" height="4.5" fill="#aeb3a4" opacity="0.26"/>
<rect x="980.1" y="552.4" width="2.3" height="5.9" fill="#aeb3a4" opacity="0.43"/>
<rect x="1137.3" y="437.1" width="2.9" height="5.7" fill="#aeb3a4" opacity="0.44"/>
<rect x="860.3" y="438.0" width="2.5" height="3.0" fill="#aeb3a4" opacity="0.28"/>
<rect x="875.9" y="418.0" width="3.7" height="4.1" fill="#aeb3a4" opacity="0.30"/>
<rect x="884.2" y="411.8" width="4.1" height="4.0" fill="#aeb3a4" opacity="0.49"/>
<rect x="895.6" y="436.1" width="4.2" height="5.0" fill="#aeb3a4" opacity="0.46"/>
<rect x="834.5" y="538.0" width="2.3" height="5.5" fill="#aeb3a4" opacity="0.49"/>
<rect x="832.2" y="654.5" width="6.1" height="2.7" fill="#aeb3a4" opacity="0.30"/>
<rect x="1148.9" y="658.1" width="3.1" height="3.2" fill="#aeb3a4" opacity="0.32"/>
<rect x="1033.5" y="416.2" width="5.4" height="3.9" fill="#aeb3a4" opacity="0.35"/>
<rect x="840.5" y="577.9" width="4.7" height="3.3" fill="#aeb3a4" opacity="0.49"/>
<rect x="1164.0" y="554.6" width="7.0" height="3.5" fill="#aeb3a4" opacity="0.44"/>
<rect x="1064.9" y="629.1" width="6.7" height="4.6" fill="#aeb3a4" opacity="0.26"/>
<rect x="885.0" y="608.6" width="2.9" height="4.3" fill="#aeb3a4" opacity="0.21"/>
<rect x="910.2" y="475.7" width="3.7" height="4.5" fill="#aeb3a4" opacity="0.29"/>
<rect x="811.0" y="426.1" width="3.0" height="4.9" fill="#aeb3a4" opacity="0.46"/>
<rect x="1090.5" y="460.4" width="2.4" height="3.1" fill="#aeb3a4" opacity="0.31"/>
<rect x="1032.9" y="481.1" width="2.7" height="2.5" fill="#aeb3a4" opacity="0.23"/>
<rect x="996.6" y="517.4" width="4.5" height="2.5" fill="#aeb3a4" opacity="0.24"/>
<rect x="1129.8" y="657.2" width="2.4" height="4.6" fill="#aeb3a4" opacity="0.27"/>
<rect x="983.3" y="460.0" width="4.1" height="2.9" fill="#aeb3a4" opacity="0.39"/>
<rect x="942.7" y="495.3" width="4.9" height="4.6" fill="#aeb3a4" opacity="0.28"/>
<rect x="1050.9" y="411.3" width="5.1" height="2.1" fill="#aeb3a4" opacity="0.31"/>
<rect x="1025.8" y="634.8" width="3.9" height="3.1" fill="#aeb3a4" opacity="0.23"/>
<rect x="1131.0" y="609.3" width="2.5" height="4.6" fill="#aeb3a4" opacity="0.34"/>
<rect x="884.8" y="614.9" width="2.1" height="2.1" fill="#aeb3a4" opacity="0.38"/>
<rect x="1063.9" y="667.2" width="6.1" height="5.5" fill="#aeb3a4" opacity="0.40"/>
<rect x="865.2" y="427.0" width="2.9" height="4.0" fill="#aeb3a4" opacity="0.34"/>
<rect x="1047.3" y="423.9" width="3.1" height="2.1" fill="#aeb3a4" opacity="0.44"/>
<rect x="967.1" y="468.2" width="4.7" height="2.4" fill="#aeb3a4" opacity="0.22"/>
<rect x="1174.9" y="579.8" width="6.0" height="5.7" fill="#aeb3a4" opacity="0.36"/>
<rect x="1022.5" y="538.2" width="6.2" height="4.1" fill="#aeb3a4" opacity="0.23"/>
<rect x="1099.6" y="408.9" width="6.8" height="4.8" fill="#aeb3a4" opacity="0.44"/>
<rect x="1140.5" y="581.7" width="6.8" height="3.9" fill="#aeb3a4" opacity="0.47"/>
<rect x="967.0" y="448.8" width="3.9" height="3.5" fill="#aeb3a4" opacity="0.45"/>
<rect x="1131.7" y="436.5" width="4.1" height="4.2" fill="#aeb3a4" opacity="0.49"/>
<rect x="1092.9" y="432.7" width="7.0" height="4.3" fill="#aeb3a4" opacity="0.22"/>
<rect x="895.3" y="581.5" width="4.5" height="3.2" fill="#aeb3a4" opacity="0.31"/>
<rect x="898.3" y="562.7" width="4.3" height="6.0" fill="#aeb3a4" opacity="0.38"/>
<rect x="870.5" y="435.4" width="2.7" height="5.6" fill="#aeb3a4" opacity="0.44"/>
<rect x="992.9" y="445.7" width="4.8" height="2.7" fill="#aeb3a4" opacity="0.39"/>
<rect x="1161.6" y="594.6" width="2.6" height="5.3" fill="#aeb3a4" opacity="0.27"/>
<rect x="1100.6" y="436.7" width="5.7" height="3.5" fill="#aeb3a4" opacity="0.29"/>
<rect x="1035.1" y="514.0" width="4.5" height="5.6" fill="#aeb3a4" opacity="0.36"/>
<rect x="1087.8" y="611.1" width="3.9" height="3.2" fill="#aeb3a4" opacity="0.26"/>
<rect x="1005.0" y="580.0" width="4.1" height="5.6" fill="#aeb3a4" opacity="0.26"/>
<rect x="1172.5" y="554.6" width="2.7" height="5.9" fill="#aeb3a4" opacity="0.48"/>
<rect x="843.7" y="571.8" width="3.3" height="4.4" fill="#aeb3a4" opacity="0.27"/>
<rect x="839.1" y="615.3" width="3.9" height="4.6" fill="#aeb3a4" opacity="0.30"/>
<rect x="850.9" y="489.5" width="4.7" height="2.7" fill="#aeb3a4" opacity="0.31"/>
<rect x="926.5" y="622.3" width="5.4" height="4.9" fill="#aeb3a4" opacity="0.21"/>
<rect x="940.0" y="657.0" width="4.6" height="4.1" fill="#aeb3a4" opacity="0.42"/>
</g>
<polyline points="597.0,470.9 621.4,481.1 637.6,509.5 657.9,503.4 684.3,505.4 694.4,513.5" fill="none" stroke="#2a3d30" stroke-width="2.500" filter="url(#b3)" opacity="0.8"/>
<polyline points="954.2,339.0 964.3,314.6 986.7,294.4 1002.9,278.1 1019.1,286.2 1047.5,290.3 1071.9,278.1" fill="none" stroke="#1f3a2c" stroke-width="2.500" filter="url(#b3)" opacity="0.85"/>
</g>
<polyline points="881.1,351.2 954.2,387.7 1059.7,399.9 1080.0,472.9 1120.6,562.2 1120.6,669.8" fill="none" stroke="#26332a" stroke-width="1" opacity="0.7"/>
<polyline points="954.2,596.7 1055.7,596.7 1080.0,623.1" fill="none" stroke="#26332a" stroke-width="1" opacity="0.6"/>
<polyline points="729.9,350.2 731.0,344.0 733.4,339.0 739.1,333.9 744.1,330.9 746.2,343.1 748.2,353.2 750.8,359.3 742.1,365.4 738.1,377.6 739.1,387.7 746.2,396.8 750.2,406.0 753.3,416.1 748.2,424.3 757.3,432.4 759.5,440.0 760.2,447.0 766.5,449.8 770.0,452.6 765.1,458.3 767.2,465.3 766.5,472.3 763.0,480.7 760.9,493.4 763.7,500.4 770.7,501.8 776.3,499.7 783.4,503.9 789.0,499.7 788.3,490.6 789.7,482.1 793.9,477.2 801.6,475.1 810.1,478.6 819.9,486.3 826.2,496.2 828.3,510.2 829.7,524.3 831.8,538.3 834.6,549.6 841.0,556.6 848.0,555.9 856.4,560.8 864.8,562.9 871.9,566.4 876.8,574.8 881.0,583.3 888.7,587.5 894.3,593.8 904.2,600.1 912.6,605.7 918.9,614.2 923.2,627.4 960.6,627.4 995.3,627.4 1026.4,627.4 1046.5,621.9 1061.1,627.4 1087.5,627.4 1121.3,627.4 1121.3,638.3 1129.5,647.5 1150.5,653.0 1176.0,655.7" fill="none" stroke="#e32222" stroke-width="4.300" stroke-linejoin="round" stroke-linecap="round"/>
<circle cx="750.2" cy="406.0" r="4" fill="#e32222"/>
<circle cx="766.5" cy="472.3" r="4" fill="#e32222"/>
<circle cx="995.3" cy="627.4" r="3.400" fill="none" stroke="#e32222" stroke-width="2"/>
<circle cx="1087.5" cy="627.4" r="3.400" fill="none" stroke="#e32222" stroke-width="2"/>
</g>
<rect x="606.500" y="279.500" width="48" height="24" fill="#fff" stroke="#cfd6df"/><line x1="630.500" y1="280" x2="630.500" y2="303" stroke="#cfd6df"/>
<path d="M613 291.500 H624 M618.500 286 V297" stroke="#3b76c8" stroke-width="2.600"/><path d="M637 291.500 H648" stroke="#3b76c8" stroke-width="2.600"/>
<rect x="663.500" y="279.500" width="82" height="24" fill="#fff" stroke="#cfd6df"/>
<text x="674.500" y="296" font-size="12" fill="#3b76c8" style="font-family:'Liberation Sans',sans-serif">Bing</text><path d="M726.500 289.500 H735.500 L731 294.500Z" fill="#3b76c8"/>
<rect x="754.500" y="279.500" width="94" height="24" fill="#fff" stroke="#cfd6df"/><rect x="801.500" y="279.500" width="47" height="24" fill="#3b76c8"/>
<text x="778" y="295.500" font-size="12" font-weight="bold" text-anchor="middle" fill="#2f66b3" style="font-family:'Noto Sans CJK SC',sans-serif">地图</text>
<text x="825" y="295.500" font-size="12" font-weight="bold" text-anchor="middle" fill="#fff" style="font-family:'Noto Sans CJK SC',sans-serif">卫星</text>
<text x="607" y="663" font-size="13" fill="#e8ece8" style="font-family:'Liberation Sans',sans-serif">bing</text>
<text x="918" y="660" font-size="9.500" fill="#fff" stroke="#222" stroke-width="1.600" paint-order="stroke" stroke-opacity="0.45" textLength="122" lengthAdjust="spacingAndGlyphs" style="font-family:'Liberation Sans',sans-serif">© 2013 Microsoft Corporation</text>
<text x="1052.500" y="660" font-size="9.500" fill="#fff" stroke="#222" stroke-width="1.600" paint-order="stroke" stroke-opacity="0.45" textLength="112" lengthAdjust="spacingAndGlyphs" style="font-family:'Liberation Sans',sans-serif">Earthstar Geographics SIO</text>
<text x="1120" y="639" font-size="9.500" text-anchor="end" fill="#fff" stroke="#222" stroke-width="1.600" paint-order="stroke" stroke-opacity="0.45" style="font-family:'Liberation Sans',sans-serif">2 miles</text>
<text x="1165" y="639" font-size="9.500" text-anchor="end" fill="#fff" stroke="#222" stroke-width="1.600" paint-order="stroke" stroke-opacity="0.45" style="font-family:'Liberation Sans',sans-serif">2 km</text>
<rect x="1063" y="643" width="57.500" height="4.500" fill="#4a90e2" stroke="#fff" stroke-width="1"/>
<rect x="1129.500" y="643" width="36.500" height="4.500" fill="#4a90e2" stroke="#fff" stroke-width="1"/>
</svg>

<div class="panel" style="left:588px;top:689px;width:597px;height:1278px"><div class="ph" style="height:37px"></div></div>
<div class="tri" style="left:600px;top:702px"></div>
<div class="h1" style="left:624px;top:696px">图表</div>
<div class="chk" style="left:1130px;top:706px"></div><div class="t" style="left:1149px;top:704px;color:#111">平均</div>
<div class="sep" style="left:596px;top:726px;width:581px"></div>
<div class="tri s" style="left:604px;top:741px"></div>
<svg class="abs" style="left:624px;top:737px" width="16" height="16" viewBox="0 0 16 16"><circle cx="8" cy="8" r="6.700" fill="#fafcff" stroke="#8fa0b3" stroke-width="1.300"/><path d="M8 4 V8.500 H11.500" fill="none" stroke="#5b7fa8" stroke-width="1.200"/></svg>
<div class="h2" style="left:648px;top:735px">计时</div>
<div class="exp" style="left:1155px;top:735px"></div>
<svg class="abs" style="left:1155px;top:735px" width="21" height="22" viewBox="0 0 21 22"><path d="M10.900 4.200 H16.800 V10.100 Z M3.800 11 V16.800 H9.600 Z" fill="#5a5a5a"/><path d="M15.300 5.700 L11.300 9.700 M5.200 15.400 L9.200 11.400" stroke="#5a5a5a" stroke-width="2.200"/></svg>
<div class="cbox" style="left:596px;top:763px"></div>
<svg class="abs" style="left:597px;top:764px" width="577" height="202" viewBox="597 764 577 202"><line x1="651.5" y1="797" x2="1165" y2="797" stroke="#e4e6e8" stroke-width="1"/><line x1="651.5" y1="823.5" x2="1165" y2="823.5" stroke="#e4e6e8" stroke-width="1"/><line x1="651.5" y1="849.5" x2="1165" y2="849.5" stroke="#e4e6e8" stroke-width="1"/><line x1="651.5" y1="875.5" x2="1165" y2="875.5" stroke="#e4e6e8" stroke-width="1"/><line x1="651.5" y1="900.5" x2="1165" y2="900.5" stroke="#e4e6e8" stroke-width="1"/><line x1="651.5" y1="926" x2="1165" y2="926" stroke="#e4e6e8" stroke-width="1"/><polygon points="661.0,926 661.0,903.4 663.5,849.0 664.4,851.8 666.9,846.7 668.9,849.5 671.4,836.6 673.2,867.5 677.0,846.7 680.1,884.9 681.8,843.9 683.3,882.1 684.9,842.8 686.3,838.8 688.6,848.4 690.8,843.3 692.3,855.1 693.9,833.2 695.3,855.7 696.8,840.5 698.1,851.8 700.9,833.8 702.8,847.3 704.9,842.8 706.6,840.5 708.2,845.0 710.0,873.1 711.6,834.9 713.3,837.7 714.8,846.1 715.9,840.0 717.8,852.9 719.7,842.2 721.7,844.5 724.0,848.4 726.0,840.5 727.9,905.7 729.6,841.1 730.7,850.6 732.7,839.4 734.6,845.0 735.8,848.4 737.4,841.7 738.8,845.0 740.0,875.9 741.7,856.8 743.1,866.4 745.1,877.6 747.6,878.2 749.0,825.9 750.4,834.9 752.3,863.6 754.9,846.1 756.6,859.6 757.0,851.8 759.8,868.6 761.5,854.6 764.0,847.8 765.8,923.1 768.2,855.1 769.9,854.0 772.2,843.9 773.6,843.3 775.0,856.8 776.7,820.3 778.3,828.2 780.0,832.7 781.5,847.3 783.1,847.3 784.5,841.7 786.0,852.3 789.0,843.0 790.7,849.0 792.4,854.0 795.2,896.7 796.9,896.7 798.6,903.4 800.6,903.4 801.9,795.0 805.3,869.2 807.0,851.8 808.1,857.4 809.8,853.4 811.2,852.9 812.6,877.6 814.1,883.2 815.7,832.7 818.2,868.6 819.9,868.1 824.4,849.0 827.2,869.2 828.9,855.1 830.6,855.7 832.1,858.5 833.4,881.0 836.2,893.9 838.8,891.6 840.7,894.5 842.4,899.0 843.5,898.4 846.3,915.2 848.6,904.0 850.8,902.9 852.5,899.0 856.8,906.8 859.5,918.6 862.6,899.5 865.1,905.1 866.9,901.2 869.9,910.2 871.6,918.6 874.8,912.4 878.3,915.8 881.5,911.9 884.5,922.0 886.4,915.8 887.9,915.2 892.4,903.4 894.1,904.0 896.3,910.8 898.3,906.8 899.5,907.9 900.8,899.5 902.5,899.5 904.2,907.9 906.4,907.4 908.7,911.9 910.0,911.9 910.9,906.8 912.6,914.7 914.3,910.2 917.0,908.5 922.1,906.3 923.2,909.1 924.3,902.3 925.8,908.5 927.1,907.4 928.8,912.4 931.0,903.4 936.1,907.9 937.2,905.7 938.9,906.3 940.4,883.2 946.0,888.3 948.8,824.8 951.8,868.6 953.0,863.6 954.9,791.7 956.1,861.9 957.2,833.2 959.1,833.8 962.2,872.0 963.6,832.7 965.1,841.7 966.4,837.7 968.7,848.4 970.9,874.8 973.7,845.6 975.2,868.1 976.8,835.5 977.9,845.0 979.7,826.5 981.3,855.1 982.7,844.5 984.2,855.1 985.8,816.9 987.2,806.8 988.7,813.6 990.0,833.2 991.4,807.9 994.5,830.4 995.7,828.2 997.3,818.1 999.0,827.0 1000.4,824.2 1002.2,813.6 1003.5,827.0 1004.9,850.1 1006.3,800.1 1008.0,829.3 1009.4,825.4 1010.8,836.0 1011.9,880.4 1018.1,900.6 1019.5,905.1 1022.1,899.5 1023.2,901.8 1024.9,900.1 1026.0,819.2 1028.2,815.8 1029.4,848.4 1030.7,840.5 1033.3,839.4 1035.0,843.3 1039.5,842.8 1040.6,850.6 1042.6,839.4 1044.5,848.4 1047.1,859.6 1048.5,851.8 1051.6,860.8 1053.0,856.3 1054.3,857.4 1057.0,870.9 1059.0,855.7 1060.1,861.9 1064.3,847.8 1066.0,861.9 1068.2,844.5 1069.6,841.1 1071.0,846.7 1072.5,864.7 1073.9,859.1 1075.2,876.5 1076.3,823.1 1077.8,833.2 1079.5,834.3 1080.9,922.0 1082.6,850.6 1085.1,840.5 1087.9,840.0 1089.6,858.5 1091.0,834.3 1092.4,841.7 1093.5,836.6 1095.8,860.8 1098.6,837.7 1100.8,845.6 1103.1,847.8 1104.4,824.2 1105.9,869.7 1107.6,850.1 1109.2,849.0 1111.8,836.0 1113.2,919.2 1115.7,836.0 1117.1,837.7 1119.4,856.3 1120.5,842.2 1122.2,872.6 1126.1,843.9 1127.8,845.6 1130.0,842.2 1131.2,843.3 1133.2,856.3 1135.1,846.1 1137.0,861.9 1138.5,846.7 1139.9,845.0 1141.3,836.0 1142.6,848.4 1144.4,900.1 1146.0,841.7 1147.4,835.5 1149.7,849.0 1151.9,848.4 1153.1,837.7 1154.5,846.7 1156.1,836.6 1157.6,841.7 1159.0,919.2 1159.0,926" fill="#cfe3f8"/><line x1="661.0" y1="797" x2="1159.0" y2="797" stroke="#000" stroke-opacity="0.07" stroke-width="1"/><line x1="661.0" y1="823.5" x2="1159.0" y2="823.5" stroke="#000" stroke-opacity="0.07" stroke-width="1"/><line x1="661.0" y1="849.5" x2="1159.0" y2="849.5" stroke="#000" stroke-opacity="0.07" stroke-width="1"/><line x1="661.0" y1="875.5" x2="1159.0" y2="875.5" stroke="#000" stroke-opacity="0.07" stroke-width="1"/><line x1="661.0" y1="900.5" x2="1159.0" y2="900.5" stroke="#000" stroke-opacity="0.07" stroke-width="1"/><line x1="661.0" y1="926" x2="1159.0" y2="926" stroke="#000" stroke-opacity="0.07" stroke-width="1"/><polyline points="661.0,903.4 663.5,849.0 664.4,851.8 666.9,846.7 668.9,849.5 671.4,836.6 673.2,867.5 677.0,846.7 680.1,884.9 681.8,843.9 683.3,882.1 684.9,842.8 686.3,838.8 688.6,848.4 690.8,843.3 692.3,855.1 693.9,833.2 695.3,855.7 696.8,840.5 698.1,851.8 700.9,833.8 702.8,847.3 704.9,842.8 706.6,840.5 708.2,845.0 710.0,873.1 711.6,834.9 713.3,837.7 714.8,846.1 715.9,840.0 717.8,852.9 719.7,842.2 721.7,844.5 724.0,848.4 726.0,840.5 727.9,905.7 729.6,841.1 730.7,850.6 732.7,839.4 734.6,845.0 735.8,848.4 737.4,841.7 738.8,845.0 740.0,875.9 741.7,856.8 743.1,866.4 745.1,877.6 747.6,878.2 749.0,825.9 750.4,834.9 752.3,863.6 754.9,846.1 756.6,859.6 757.0,851.8 759.8,868.6 761.5,854.6 764.0,847.8 765.8,923.1 768.2,855.1 769.9,854.0 772.2,843.9 773.6,843.3 775.0,856.8 776.7,820.3 778.3,828.2 780.0,832.7 781.5,847.3 783.1,847.3 784.5,841.7 786.0,852.3 789.0,843.0 790.7,849.0 792.4,854.0 795.2,896.7 796.9,896.7 798.6,903.4 800.6,903.4 801.9,795.0 805.3,869.2 807.0,851.8 808.1,857.4 809.8,853.4 811.2,852.9 812.6,877.6 814.1,883.2 815.7,832.7 818.2,868.6 819.9,868.1 824.4,849.0 827.2,869.2 828.9,855.1 830.6,855.7 832.1,858.5 833.4,881.0 836.2,893.9 838.8,891.6 840.7,894.5 842.4,899.0 843.5,898.4 846.3,915.2 848.6,904.0 850.8,902.9 852.5,899.0 856.8,906.8 859.5,918.6 862.6,899.5 865.1,905.1 866.9,901.2 869.9,910.2 871.6,918.6 874.8,912.4 878.3,915.8 881.5,911.9 884.5,922.0 886.4,915.8 887.9,915.2 892.4,903.4 894.1,904.0 896.3,910.8 898.3,906.8 899.5,907.9 900.8,899.5 902.5,899.5 904.2,907.9 906.4,907.4 908.7,911.9 910.0,911.9 910.9,906.8 912.6,914.7 914.3,910.2 917.0,908.5 922.1,906.3 923.2,909.1 924.3,902.3 925.8,908.5 927.1,907.4 928.8,912.4 931.0,903.4 936.1,907.9 937.2,905.7 938.9,906.3 940.4,883.2 946.0,888.3 948.8,824.8 951.8,868.6 953.0,863.6 954.9,791.7 956.1,861.9 957.2,833.2 959.1,833.8 962.2,872.0 963.6,832.7 965.1,841.7 966.4,837.7 968.7,848.4 970.9,874.8 973.7,845.6 975.2,868.1 976.8,835.5 977.9,845.0 979.7,826.5 981.3,855.1 982.7,844.5 984.2,855.1 985.8,816.9 987.2,806.8 988.7,813.6 990.0,833.2 991.4,807.9 994.5,830.4 995.7,828.2 997.3,818.1 999.0,827.0 1000.4,824.2 1002.2,813.6 1003.5,827.0 1004.9,850.1 1006.3,800.1 1008.0,829.3 1009.4,825.4 1010.8,836.0 1011.9,880.4 1018.1,900.6 1019.5,905.1 1022.1,899.5 1023.2,901.8 1024.9,900.1 1026.0,819.2 1028.2,815.8 1029.4,848.4 1030.7,840.5 1033.3,839.4 1035.0,843.3 1039.5,842.8 1040.6,850.6 1042.6,839.4 1044.5,848.4 1047.1,859.6 1048.5,851.8 1051.6,860.8 1053.0,856.3 1054.3,857.4 1057.0,870.9 1059.0,855.7 1060.1,861.9 1064.3,847.8 1066.0,861.9 1068.2,844.5 1069.6,841.1 1071.0,846.7 1072.5,864.7 1073.9,859.1 1075.2,876.5 1076.3,823.1 1077.8,833.2 1079.5,834.3 1080.9,922.0 1082.6,850.6 1085.1,840.5 1087.9,840.0 1089.6,858.5 1091.0,834.3 1092.4,841.7 1093.5,836.6 1095.8,860.8 1098.6,837.7 1100.8,845.6 1103.1,847.8 1104.4,824.2 1105.9,869.7 1107.6,850.1 1109.2,849.0 1111.8,836.0 1113.2,919.2 1115.7,836.0 1117.1,837.7 1119.4,856.3 1120.5,842.2 1122.2,872.6 1126.1,843.9 1127.8,845.6 1130.0,842.2 1131.2,843.3 1133.2,856.3 1135.1,846.1 1137.0,861.9 1138.5,846.7 1139.9,845.0 1141.3,836.0 1142.6,848.4 1144.4,900.1 1146.0,841.7 1147.4,835.5 1149.7,849.0 1151.9,848.4 1153.1,837.7 1154.5,846.7 1156.1,836.6 1157.6,841.7 1159.0,919.2" fill="none" stroke="#1a75cf" stroke-width="2" stroke-linejoin="round"/><line x1="656.5" y1="784" x2="656.5" y2="926" stroke="#b5c4d2" stroke-width="1"/><line x1="651.5" y1="926" x2="1165" y2="926" stroke="#b5c4d2" stroke-width="1"/><line x1="661.0" y1="926" x2="661.0" y2="930" stroke="#b5c4d2" stroke-width="1"/><text x="648" y="800.6" font-size="10" font-weight="bold" text-anchor="end" fill="#1f6fb5" textLength="15.2" lengthAdjust="spacingAndGlyphs">36</text><text x="648" y="827.1" font-size="10" font-weight="bold" text-anchor="end" fill="#1f6fb5" textLength="15.2" lengthAdjust="spacingAndGlyphs">30</text><text x="648" y="853.1" font-size="10" font-weight="bold" text-anchor="end" fill="#1f6fb5" textLength="15.2" lengthAdjust="spacingAndGlyphs">24</text><text x="648" y="879.1" font-size="10" font-weight="bold" text-anchor="end" fill="#1f6fb5" textLength="15.2" lengthAdjust="spacingAndGlyphs">18</text><text x="648" y="904.1" font-size="10" font-weight="bold" text-anchor="end" fill="#1f6fb5" textLength="15.2" lengthAdjust="spacingAndGlyphs">12</text><text x="648" y="929.6" font-size="10" font-weight="bold" text-anchor="end" fill="#1f6fb5" textLength="7.6" lengthAdjust="spacingAndGlyphs">6</text><text transform="translate(618,856) rotate(-90)" font-size="11" font-weight="bold" text-anchor="middle" fill="#1f6fb5" textLength="73" lengthAdjust="spacingAndGlyphs">速度 (km/h)</text><text x="755.5" y="937.5" font-size="10" font-weight="bold" fill="#2b2b2b" textLength="55.0" lengthAdjust="spacingAndGlyphs">01:23:20</text><text x="877.5" y="937.5" font-size="10" font-weight="bold" fill="#2b2b2b" textLength="55.0" lengthAdjust="spacingAndGlyphs">02:46:40</text><text x="999.5" y="937.5" font-size="10" font-weight="bold" fill="#2b2b2b" textLength="55.0" lengthAdjust="spacingAndGlyphs">04:10:00</text><text x="1121.5" y="937.5" font-size="10" font-weight="bold" fill="#2b2b2b" textLength="55.0" lengthAdjust="spacingAndGlyphs">05:33:20</text></svg>
<div class="dd" style="left:846px;top:943px">时间<small>(h:m:s)</small><u></u></div>
<div class="tri s" style="left:604px;top:989px"></div>
<svg class="abs" style="left:624px;top:985px" width="18" height="14" viewBox="0 0 18 14"><path d="M2 11 L7 8 L11 7 L16 2.500" fill="none" stroke="#b58a9a" stroke-width="1"/><circle cx="2.500" cy="11" r="1.800" fill="#e0566a"/><circle cx="7" cy="8" r="1.800" fill="#7d8fd0"/><circle cx="11" cy="7" r="1.800" fill="#e0566a"/><circle cx="15.500" cy="3" r="1.800" fill="#e0566a"/><circle cx="13" cy="10" r="1.300" fill="#7d8fd0"/></svg>
<div class="h2" style="left:648px;top:983px">海拔高度</div>
<div class="exp" style="left:1155px;top:983px"></div>
<svg class="abs" style="left:1155px;top:983px" width="21" height="22" viewBox="0 0 21 22"><path d="M10.900 4.200 H16.800 V10.100 Z M3.800 11 V16.800 H9.600 Z" fill="#5a5a5a"/><path d="M15.300 5.700 L11.300 9.700 M5.200 15.400 L9.200 11.400" stroke="#5a5a5a" stroke-width="2.200"/></svg>
<div class="cbox" style="left:596px;top:1011px"></div>
<svg class="abs" style="left:597px;top:1012px" width="577" height="202" viewBox="597 1012 577 202"><line x1="671.5" y1="1038" x2="1165" y2="1038" stroke="#e4e6e8" stroke-width="1"/><line x1="671.5" y1="1061" x2="1165" y2="1061" stroke="#e4e6e8" stroke-width="1"/><line x1="671.5" y1="1084" x2="1165" y2="1084" stroke="#e4e6e8" stroke-width="1"/><line x1="671.5" y1="1106.5" x2="1165" y2="1106.5" stroke="#e4e6e8" stroke-width="1"/><line x1="671.5" y1="1129" x2="1165" y2="1129" stroke="#e4e6e8" stroke-width="1"/><line x1="671.5" y1="1151.5" x2="1165" y2="1151.5" stroke="#e4e6e8" stroke-width="1"/><line x1="671.5" y1="1174" x2="1165" y2="1174" stroke="#e4e6e8" stroke-width="1"/><polygon points="680.9,1174 680.9,1167.4 686.6,1168.2 698.8,1167.8 711.1,1167.2 727.3,1167.4 739.6,1166.6 755.9,1165.8 766.0,1164.8 772.1,1163.3 775.8,1160.7 779.3,1162.5 784.4,1162.1 792.5,1161.3 800.7,1161.3 804.7,1159.9 810.8,1160.7 818.0,1159.7 822.0,1157.2 827.1,1158.0 831.2,1153.6 835.3,1153.0 837.7,1154.8 843.4,1152.1 848.5,1148.5 850.6,1149.5 854.0,1146.0 856.7,1146.8 860.7,1143.4 863.8,1143.8 869.9,1136.9 874.0,1130.1 878.1,1123.0 881.2,1119.5 887.5,1106.9 894.9,1093.2 903.3,1082.6 910.7,1070.0 918.1,1057.3 919.8,1057.8 921.9,1055.7 925.5,1061.6 933.9,1076.3 944.4,1090.0 949.7,1098.4 957.1,1114.2 965.5,1129.0 970.8,1137.0 977.1,1143.3 980.2,1143.3 984.4,1146.9 991.8,1149.6 998.1,1153.2 1003.0,1155.3 1005.5,1152.6 1010.8,1155.9 1017.1,1158.5 1025.5,1160.6 1032.9,1160.2 1041.3,1161.2 1049.7,1161.2 1058.2,1162.3 1062.4,1161.8 1064.9,1160.6 1068.7,1163.5 1077.1,1165.4 1087.7,1166.9 1104.5,1166.9 1115.0,1167.7 1122.4,1167.1 1129.8,1167.3 1138.2,1167.7 1148.8,1168.4 1155.1,1167.3 1158.9,1167.3 1158.9,1174" fill="#d2e6c9"/><line x1="680.9" y1="1038" x2="1158.9" y2="1038" stroke="#000" stroke-opacity="0.07" stroke-width="1"/><line x1="680.9" y1="1061" x2="1158.9" y2="1061" stroke="#000" stroke-opacity="0.07" stroke-width="1"/><line x1="680.9" y1="1084" x2="1158.9" y2="1084" stroke="#000" stroke-opacity="0.07" stroke-width="1"/><line x1="680.9" y1="1106.5" x2="1158.9" y2="1106.5" stroke="#000" stroke-opacity="0.07" stroke-width="1"/><line x1="680.9" y1="1129" x2="1158.9" y2="1129" stroke="#000" stroke-opacity="0.07" stroke-width="1"/><line x1="680.9" y1="1151.5" x2="1158.9" y2="1151.5" stroke="#000" stroke-opacity="0.07" stroke-width="1"/><line x1="680.9" y1="1174" x2="1158.9" y2="1174" stroke="#000" stroke-opacity="0.07" stroke-width="1"/><polyline points="680.9,1167.4 686.6,1168.2 698.8,1167.8 711.1,1167.2 727.3,1167.4 739.6,1166.6 755.9,1165.8 766.0,1164.8 772.1,1163.3 775.8,1160.7 779.3,1162.5 784.4,1162.1 792.5,1161.3 800.7,1161.3 804.7,1159.9 810.8,1160.7 818.0,1159.7 822.0,1157.2 827.1,1158.0 831.2,1153.6 835.3,1153.0 837.7,1154.8 843.4,1152.1 848.5,1148.5 850.6,1149.5 854.0,1146.0 856.7,1146.8 860.7,1143.4 863.8,1143.8 869.9,1136.9 874.0,1130.1 878.1,1123.0 881.2,1119.5 887.5,1106.9 894.9,1093.2 903.3,1082.6 910.7,1070.0 918.1,1057.3 919.8,1057.8 921.9,1055.7 925.5,1061.6 933.9,1076.3 944.4,1090.0 949.7,1098.4 957.1,1114.2 965.5,1129.0 970.8,1137.0 977.1,1143.3 980.2,1143.3 984.4,1146.9 991.8,1149.6 998.1,1153.2 1003.0,1155.3 1005.5,1152.6 1010.8,1155.9 1017.1,1158.5 1025.5,1160.6 1032.9,1160.2 1041.3,1161.2 1049.7,1161.2 1058.2,1162.3 1062.4,1161.8 1064.9,1160.6 1068.7,1163.5 1077.1,1165.4 1087.7,1166.9 1104.5,1166.9 1115.0,1167.7 1122.4,1167.1 1129.8,1167.3 1138.2,1167.7 1148.8,1168.4 1155.1,1167.3 1158.9,1167.3" fill="none" stroke="#2f7d17" stroke-width="2" stroke-linejoin="round"/><line x1="676.5" y1="1032" x2="676.5" y2="1174" stroke="#b5c4d2" stroke-width="1"/><line x1="671.5" y1="1174" x2="1165" y2="1174" stroke="#b5c4d2" stroke-width="1"/><line x1="680.9" y1="1174" x2="680.9" y2="1178" stroke="#b5c4d2" stroke-width="1"/><text x="668" y="1041.6" font-size="10" font-weight="bold" text-anchor="end" fill="#3a861d" textLength="34.5" lengthAdjust="spacingAndGlyphs">1,200</text><text x="668" y="1064.6" font-size="10" font-weight="bold" text-anchor="end" fill="#3a861d" textLength="34.5" lengthAdjust="spacingAndGlyphs">1,000</text><text x="668" y="1087.6" font-size="10" font-weight="bold" text-anchor="end" fill="#3a861d" textLength="22.8" lengthAdjust="spacingAndGlyphs">800</text><text x="668" y="1110.1" font-size="10" font-weight="bold" text-anchor="end" fill="#3a861d" textLength="22.8" lengthAdjust="spacingAndGlyphs">600</text><text x="668" y="1132.6" font-size="10" font-weight="bold" text-anchor="end" fill="#3a861d" textLength="22.8" lengthAdjust="spacingAndGlyphs">400</text><text x="668" y="1155.1" font-size="10" font-weight="bold" text-anchor="end" fill="#3a861d" textLength="22.8" lengthAdjust="spacingAndGlyphs">200</text><text x="668" y="1177.6" font-size="10" font-weight="bold" text-anchor="end" fill="#3a861d" textLength="7.6" lengthAdjust="spacingAndGlyphs">0</text><text transform="translate(620,1104) rotate(-90)" font-size="11" font-weight="bold" text-anchor="middle" fill="#3a861d" textLength="51" lengthAdjust="spacingAndGlyphs">高度 (m)</text><text x="775.4" y="1185.5" font-size="10" font-weight="bold" fill="#2b2b2b" textLength="15.2" lengthAdjust="spacingAndGlyphs">25</text><text x="880.4" y="1185.5" font-size="10" font-weight="bold" fill="#2b2b2b" textLength="15.2" lengthAdjust="spacingAndGlyphs">50</text><text x="983.9" y="1185.5" font-size="10" font-weight="bold" fill="#2b2b2b" textLength="15.2" lengthAdjust="spacingAndGlyphs">75</text><text x="1084.1" y="1185.5" font-size="10" font-weight="bold" fill="#2b2b2b" textLength="22.8" lengthAdjust="spacingAndGlyphs">100</text></svg>
<div class="dd" style="left:846px;top:1191px">距离<small>(km)</small><u></u></div>
<div class="tri s" style="left:604px;top:1237px"></div>
<svg class="abs" style="left:624px;top:1233px" width="18" height="16" viewBox="0 0 18 16"><path d="M9 14.500 C3 10.500 1 8 1 5.200 C1 2.800 2.800 1.200 5 1.200 C6.800 1.200 8.200 2.200 9 3.600 C9.800 2.200 11.200 1.200 13 1.200 C15.200 1.200 17 2.800 17 5.200 C17 8 15 10.500 9 14.500Z" fill="#f3a3a0" stroke="#e9c7c4" stroke-width="1"/><path d="M4 4 C5 3 7 3 8 4.500" fill="none" stroke="#fbd5d2" stroke-width="1.500"/></svg>
<div class="h2" style="left:648px;top:1231px">心率</div>
<div class="exp" style="left:1155px;top:1231px"></div>
<svg class="abs" style="left:1155px;top:1231px" width="21" height="22" viewBox="0 0 21 22"><path d="M10.900 4.200 H16.800 V10.100 Z M3.800 11 V16.800 H9.600 Z" fill="#5a5a5a"/><path d="M15.300 5.700 L11.300 9.700 M5.200 15.400 L9.200 11.400" stroke="#5a5a5a" stroke-width="2.200"/></svg>
<div class="cbox" style="left:596px;top:1259px"></div>
<svg class="abs" style="left:597px;top:1260px" width="577" height="202" viewBox="597 1260 577 202"><line x1="659.5" y1="1282" x2="1165" y2="1282" stroke="#e4e6e8" stroke-width="1"/><line x1="659.5" y1="1317" x2="1165" y2="1317" stroke="#e4e6e8" stroke-width="1"/><line x1="659.5" y1="1352" x2="1165" y2="1352" stroke="#e4e6e8" stroke-width="1"/><line x1="659.5" y1="1387" x2="1165" y2="1387" stroke="#e4e6e8" stroke-width="1"/><line x1="659.5" y1="1422" x2="1165" y2="1422" stroke="#e4e6e8" stroke-width="1"/><polygon points="669.0,1422 669.0,1421.9 671.4,1373.5 673.1,1364.3 674.9,1371.4 676.4,1371.4 677.8,1346.8 679.2,1346.8 681.0,1367.8 683.8,1357.3 685.2,1358.0 688.0,1382.6 689.3,1351.7 690.8,1382.6 695.0,1338.4 698.1,1362.2 699.5,1355.2 701.2,1366.4 702.6,1345.4 704.0,1345.4 705.4,1375.6 708.7,1352.4 709.8,1353.1 711.2,1364.3 713.0,1343.3 714.7,1354.5 716.1,1345.4 717.8,1345.4 720.3,1354.5 722.0,1377.0 723.4,1377.0 724.8,1334.8 726.2,1359.4 727.6,1352.4 729.3,1370.0 731.1,1370.0 733.2,1351.7 734.9,1393.1 736.8,1348.9 738.2,1350.3 739.6,1357.3 741.7,1352.4 743.1,1353.1 744.2,1362.9 745.3,1348.2 746.7,1382.6 748.4,1362.9 749.4,1370.0 752.2,1341.9 754.0,1343.3 755.7,1393.1 757.5,1371.4 759.2,1341.9 761.0,1361.5 762.4,1366.4 764.4,1357.3 766.2,1332.7 767.6,1384.0 769.0,1385.4 771.9,1367.1 773.3,1371.4 774.8,1359.4 776.1,1384.0 778.2,1362.9 779.3,1363.6 781.0,1357.3 782.8,1384.0 787.6,1348.2 789.0,1364.3 790.5,1350.3 791.9,1339.8 793.3,1364.3 795.0,1360.1 797.0,1357.3 798.7,1343.3 800.8,1319.4 802.9,1352.4 805.7,1329.2 807.5,1395.9 809.6,1354.5 811.0,1378.4 814.1,1332.0 815.0,1327.8 816.7,1330.6 819.5,1312.4 821.2,1341.9 824.0,1311.0 826.8,1329.2 828.2,1325.7 829.6,1326.4 831.3,1311.0 834.2,1322.2 835.6,1315.9 837.0,1320.1 838.0,1299.7 839.4,1306.8 840.8,1300.4 842.5,1308.2 844.1,1296.9 845.7,1310.3 847.6,1296.9 849.7,1296.2 851.2,1294.8 852.9,1304.6 854.3,1306.8 857.1,1296.9 858.8,1301.1 860.2,1301.8 861.6,1300.4 864.4,1306.8 865.8,1294.8 867.2,1310.3 870.0,1296.2 871.4,1296.2 873.5,1288.5 875.2,1288.5 877.8,1299.7 879.9,1299.7 882.0,1296.2 884.4,1298.3 886.2,1310.3 888.0,1296.9 889.7,1299.7 891.4,1297.6 893.2,1302.5 895.0,1315.9 897.4,1305.3 899.5,1301.8 901.6,1302.5 905.1,1319.4 906.6,1320.1 909.4,1296.2 912.2,1292.7 913.6,1313.8 916.4,1297.6 918.1,1301.1 919.5,1296.2 920.9,1296.9 922.7,1303.9 923.8,1299.7 925.1,1304.6 927.3,1301.1 929.7,1292.7 931.6,1299.7 933.2,1296.2 935.3,1301.8 936.7,1302.5 938.2,1313.8 939.8,1298.3 941.7,1303.9 942.8,1303.2 944.5,1332.0 949.4,1370.7 951.1,1350.3 952.2,1386.8 953.6,1378.4 956.1,1399.4 957.8,1391.0 961.0,1381.9 962.4,1386.1 963.9,1381.9 965.5,1394.5 966.9,1379.8 968.3,1379.1 969.8,1371.4 971.2,1379.8 972.6,1380.5 974.2,1388.9 976.5,1379.8 978.9,1399.4 980.6,1392.4 982.7,1412.1 984.5,1402.3 987.0,1387.5 988.7,1386.8 991.2,1399.4 992.9,1388.2 994.7,1391.0 996.6,1393.8 998.5,1406.5 1000.3,1388.9 1001.3,1392.4 1003.2,1370.0 1004.6,1376.3 1007.1,1343.3 1008.8,1395.9 1010.2,1345.4 1011.2,1354.5 1014.4,1338.4 1020.7,1339.8 1022.4,1334.8 1025.6,1373.5 1027.0,1338.4 1028.7,1384.0 1030.3,1385.4 1031.7,1364.3 1032.6,1370.0 1034.8,1348.9 1036.9,1347.5 1038.5,1360.8 1040.1,1347.5 1041.8,1353.8 1043.9,1353.1 1046.0,1334.8 1048.8,1344.7 1051.6,1341.9 1053.7,1344.7 1055.8,1347.5 1058.9,1367.8 1060.3,1370.0 1062.1,1359.4 1063.5,1359.4 1065.0,1341.9 1066.4,1382.6 1068.2,1343.3 1071.3,1348.2 1074.8,1342.6 1076.6,1325.7 1078.3,1385.4 1079.4,1382.6 1081.1,1352.4 1082.5,1394.5 1084.2,1341.9 1085.7,1348.9 1087.0,1343.3 1088.4,1359.4 1089.5,1355.9 1090.9,1371.4 1093.0,1355.9 1095.1,1355.9 1096.8,1375.6 1098.4,1350.3 1101.0,1366.4 1102.4,1355.9 1104.3,1386.1 1107.1,1341.9 1110.2,1359.4 1111.3,1351.0 1115.1,1384.0 1117.2,1345.4 1118.6,1373.5 1121.5,1343.3 1122.8,1364.3 1125.8,1338.4 1128.6,1357.3 1131.0,1348.9 1133.1,1343.3 1134.2,1371.4 1135.9,1345.4 1138.4,1352.4 1140.1,1343.3 1141.9,1352.4 1142.9,1347.5 1144.6,1371.4 1146.0,1336.2 1148.9,1354.5 1151.3,1346.8 1153.4,1347.5 1154.8,1361.5 1156.5,1332.7 1159.5,1367.8 1159.5,1422" fill="#eccfcf"/><line x1="669.0" y1="1282" x2="1159.5" y2="1282" stroke="#000" stroke-opacity="0.07" stroke-width="1"/><line x1="669.0" y1="1317" x2="1159.5" y2="1317" stroke="#000" stroke-opacity="0.07" stroke-width="1"/><line x1="669.0" y1="1352" x2="1159.5" y2="1352" stroke="#000" stroke-opacity="0.07" stroke-width="1"/><line x1="669.0" y1="1387" x2="1159.5" y2="1387" stroke="#000" stroke-opacity="0.07" stroke-width="1"/><line x1="669.0" y1="1422" x2="1159.5" y2="1422" stroke="#000" stroke-opacity="0.07" stroke-width="1"/><polyline points="669.0,1421.9 671.4,1373.5 673.1,1364.3 674.9,1371.4 676.4,1371.4 677.8,1346.8 679.2,1346.8 681.0,1367.8 683.8,1357.3 685.2,1358.0 688.0,1382.6 689.3,1351.7 690.8,1382.6 695.0,1338.4 698.1,1362.2 699.5,1355.2 701.2,1366.4 702.6,1345.4 704.0,1345.4 705.4,1375.6 708.7,1352.4 709.8,1353.1 711.2,1364.3 713.0,1343.3 714.7,1354.5 716.1,1345.4 717.8,1345.4 720.3,1354.5 722.0,1377.0 723.4,1377.0 724.8,1334.8 726.2,1359.4 727.6,1352.4 729.3,1370.0 731.1,1370.0 733.2,1351.7 734.9,1393.1 736.8,1348.9 738.2,1350.3 739.6,1357.3 741.7,1352.4 743.1,1353.1 744.2,1362.9 745.3,1348.2 746.7,1382.6 748.4,1362.9 749.4,1370.0 752.2,1341.9 754.0,1343.3 755.7,1393.1 757.5,1371.4 759.2,1341.9 761.0,1361.5 762.4,1366.4 764.4,1357.3 766.2,1332.7 767.6,1384.0 769.0,1385.4 771.9,1367.1 773.3,1371.4 774.8,1359.4 776.1,1384.0 778.2,1362.9 779.3,1363.6 781.0,1357.3 782.8,1384.0 787.6,1348.2 789.0,1364.3 790.5,1350.3 791.9,1339.8 793.3,1364.3 795.0,1360.1 797.0,1357.3 798.7,1343.3 800.8,1319.4 802.9,1352.4 805.7,1329.2 807.5,1395.9 809.6,1354.5 811.0,1378.4 814.1,1332.0 815.0,1327.8 816.7,1330.6 819.5,1312.4 821.2,1341.9 824.0,1311.0 826.8,1329.2 828.2,1325.7 829.6,1326.4 831.3,1311.0 834.2,1322.2 835.6,1315.9 837.0,1320.1 838.0,1299.7 839.4,1306.8 840.8,1300.4 842.5,1308.2 844.1,1296.9 845.7,1310.3 847.6,1296.9 849.7,1296.2 851.2,1294.8 852.9,1304.6 854.3,1306.8 857.1,1296.9 858.8,1301.1 860.2,1301.8 861.6,1300.4 864.4,1306.8 865.8,1294.8 867.2,1310.3 870.0,1296.2 871.4,1296.2 873.5,1288.5 875.2,1288.5 877.8,1299.7 879.9,1299.7 882.0,1296.2 884.4,1298.3 886.2,1310.3 888.0,1296.9 889.7,1299.7 891.4,1297.6 893.2,1302.5 895.0,1315.9 897.4,1305.3 899.5,1301.8 901.6,1302.5 905.1,1319.4 906.6,1320.1 909.4,1296.2 912.2,1292.7 913.6,1313.8 916.4,1297.6 918.1,1301.1 919.5,1296.2 920.9,1296.9 922.7,1303.9 923.8,1299.7 925.1,1304.6 927.3,1301.1 929.7,1292.7 931.6,1299.7 933.2,1296.2 935.3,1301.8 936.7,1302.5 938.2,1313.8 939.8,1298.3 941.7,1303.9 942.8,1303.2 944.5,1332.0 949.4,1370.7 951.1,1350.3 952.2,1386.8 953.6,1378.4 956.1,1399.4 957.8,1391.0 961.0,1381.9 962.4,1386.1 963.9,1381.9 965.5,1394.5 966.9,1379.8 968.3,1379.1 969.8,1371.4 971.2,1379.8 972.6,1380.5 974.2,1388.9 976.5,1379.8 978.9,1399.4 980.6,1392.4 982.7,1412.1 984.5,1402.3 987.0,1387.5 988.7,1386.8 991.2,1399.4 992.9,1388.2 994.7,1391.0 996.6,1393.8 998.5,1406.5 1000.3,1388.9 1001.3,1392.4 1003.2,1370.0 1004.6,1376.3 1007.1,1343.3 1008.8,1395.9 1010.2,1345.4 1011.2,1354.5 1014.4,1338.4 1020.7,1339.8 1022.4,1334.8 1025.6,1373.5 1027.0,1338.4 1028.7,1384.0 1030.3,1385.4 1031.7,1364.3 1032.6,1370.0 1034.8,1348.9 1036.9,1347.5 1038.5,1360.8 1040.1,1347.5 1041.8,1353.8 1043.9,1353.1 1046.0,1334.8 1048.8,1344.7 1051.6,1341.9 1053.7,1344.7 1055.8,1347.5 1058.9,1367.8 1060.3,1370.0 1062.1,1359.4 1063.5,1359.4 1065.0,1341.9 1066.4,1382.6 1068.2,1343.3 1071.3,1348.2 1074.8,1342.6 1076.6,1325.7 1078.3,1385.4 1079.4,1382.6 1081.1,1352.4 1082.5,1394.5 1084.2,1341.9 1085.7,1348.9 1087.0,1343.3 1088.4,1359.4 1089.5,1355.9 1090.9,1371.4 1093.0,1355.9 1095.1,1355.9 1096.8,1375.6 1098.4,1350.3 1101.0,1366.4 1102.4,1355.9 1104.3,1386.1 1107.1,1341.9 1110.2,1359.4 1111.3,1351.0 1115.1,1384.0 1117.2,1345.4 1118.6,1373.5 1121.5,1343.3 1122.8,1364.3 1125.8,1338.4 1128.6,1357.3 1131.0,1348.9 1133.1,1343.3 1134.2,1371.4 1135.9,1345.4 1138.4,1352.4 1140.1,1343.3 1141.9,1352.4 1142.9,1347.5 1144.6,1371.4 1146.0,1336.2 1148.9,1354.5 1151.3,1346.8 1153.4,1347.5 1154.8,1361.5 1156.5,1332.7 1159.5,1367.8" fill="none" stroke="#990a0a" stroke-width="2" stroke-linejoin="round"/><line x1="664.5" y1="1281" x2="664.5" y2="1422" stroke="#b5c4d2" stroke-width="1"/><line x1="659.5" y1="1422" x2="1165" y2="1422" stroke="#b5c4d2" stroke-width="1"/><line x1="669.0" y1="1422" x2="669.0" y2="1426" stroke="#b5c4d2" stroke-width="1"/><text x="655" y="1285.6" font-size="10" font-weight="bold" text-anchor="end" fill="#8b1515" textLength="22.8" lengthAdjust="spacingAndGlyphs">180</text><text x="655" y="1320.6" font-size="10" font-weight="bold" text-anchor="end" fill="#8b1515" textLength="22.8" lengthAdjust="spacingAndGlyphs">160</text><text x="655" y="1355.6" font-size="10" font-weight="bold" text-anchor="end" fill="#8b1515" textLength="22.8" lengthAdjust="spacingAndGlyphs">140</text><text x="655" y="1390.6" font-size="10" font-weight="bold" text-anchor="end" fill="#8b1515" textLength="22.8" lengthAdjust="spacingAndGlyphs">120</text><text x="655" y="1425.6" font-size="10" font-weight="bold" text-anchor="end" fill="#8b1515" textLength="22.8" lengthAdjust="spacingAndGlyphs">100</text><text transform="translate(620,1352) rotate(-90)" font-size="11" font-weight="bold" text-anchor="middle" fill="#8b1515" textLength="67" lengthAdjust="spacingAndGlyphs">心率 (bpm)</text><text x="762.0" y="1433.5" font-size="10" font-weight="bold" fill="#2b2b2b" textLength="55.0" lengthAdjust="spacingAndGlyphs">01:23:20</text><text x="882.0" y="1433.5" font-size="10" font-weight="bold" fill="#2b2b2b" textLength="55.0" lengthAdjust="spacingAndGlyphs">02:46:40</text><text x="1002.5" y="1433.5" font-size="10" font-weight="bold" fill="#2b2b2b" textLength="55.0" lengthAdjust="spacingAndGlyphs">04:10:00</text><text x="1122.5" y="1433.5" font-size="10" font-weight="bold" fill="#2b2b2b" textLength="55.0" lengthAdjust="spacingAndGlyphs">05:33:20</text></svg>
<div class="dd" style="left:846px;top:1439px">时间<small>(h:m:s)</small><u></u></div>
<div class="tri s" style="left:604px;top:1485px"></div>
<svg class="abs" style="left:624px;top:1481px" width="18" height="18" viewBox="0 0 18 18"><path d="M1.500 10.500 A7.500 7.500 0 0 1 16.500 10.500" fill="none" stroke="#f8d3b0" stroke-width="2"/><path d="M4 10.500 A5 5 0 0 1 14 10.500" fill="none" stroke="#f4b27a" stroke-width="2"/><path d="M6.500 10.500 A2.500 2.500 0 0 1 11.500 10.500" fill="none" stroke="#ee8b3c" stroke-width="1.800"/><path d="M5.500 17 L9 10 L12.500 17 M7 14.500 H11" fill="none" stroke="#9a9a9a" stroke-width="1.400"/></svg>
<div class="h2" style="left:648px;top:1479px">踏频</div>
<div class="exp" style="left:1155px;top:1479px"></div>
<svg class="abs" style="left:1155px;top:1479px" width="21" height="22" viewBox="0 0 21 22"><path d="M10.900 4.200 H16.800 V10.100 Z M3.800 11 V16.800 H9.600 Z" fill="#5a5a5a"/><path d="M15.300 5.700 L11.300 9.700 M5.200 15.400 L9.200 11.400" stroke="#5a5a5a" stroke-width="2.200"/></svg>
<div class="cbox" style="left:596px;top:1507px"></div>
<svg class="abs" style="left:597px;top:1508px" width="577" height="202" viewBox="597 1508 577 202"><line x1="651.5" y1="1536" x2="1165" y2="1536" stroke="#e4e6e8" stroke-width="1"/><line x1="651.5" y1="1569.5" x2="1165" y2="1569.5" stroke="#e4e6e8" stroke-width="1"/><line x1="651.5" y1="1603" x2="1165" y2="1603" stroke="#e4e6e8" stroke-width="1"/><line x1="651.5" y1="1636.5" x2="1165" y2="1636.5" stroke="#e4e6e8" stroke-width="1"/><line x1="651.5" y1="1670" x2="1165" y2="1670" stroke="#e4e6e8" stroke-width="1"/><polygon points="660.9,1670 660.9,1590.6 662.6,1540.7 664.1,1555.5 665.4,1550.5 666.8,1669.9 668.3,1550.5 670.0,1540.7 671.7,1573.0 673.1,1559.7 674.5,1669.9 676.1,1550.5 677.8,1566.0 679.2,1669.9 680.6,1547.7 683.0,1669.9 684.8,1542.1 686.9,1553.3 689.0,1545.6 690.4,1551.9 692.2,1669.9 693.9,1546.3 695.3,1542.8 697.0,1669.9 698.4,1542.8 700.2,1536.5 701.6,1669.9 703.0,1546.3 704.4,1546.3 705.9,1544.2 707.3,1553.3 708.9,1669.9 710.5,1536.5 712.2,1540.0 713.3,1669.9 715.0,1540.7 716.7,1669.9 718.1,1550.5 719.5,1545.6 721.3,1548.4 722.4,1559.0 724.1,1669.9 725.1,1544.2 726.5,1616.6 727.9,1544.2 729.7,1669.9 731.1,1542.1 732.5,1544.2 733.9,1551.9 735.8,1544.2 737.4,1548.4 738.9,1669.9 740.3,1550.5 741.7,1669.9 743.3,1566.0 744.8,1567.4 746.2,1571.6 748.0,1669.9 750.8,1669.9 752.2,1550.5 753.9,1549.1 755.3,1669.9 756.8,1541.4 758.5,1563.2 759.9,1545.6 761.6,1669.9 763.0,1550.5 764.8,1669.9 766.2,1567.4 767.7,1557.6 769.1,1556.9 771.9,1545.6 773.7,1559.7 775.4,1535.1 777.1,1542.8 778.9,1550.5 780.3,1636.2 782.0,1549.1 784.5,1542.1 787.7,1539.3 789.7,1555.5 791.2,1542.1 792.9,1559.7 797.0,1563.2 798.7,1565.3 800.5,1669.2 802.6,1669.2 804.0,1548.4 805.1,1554.8 807.1,1549.1 809.4,1545.6 811.0,1547.7 812.9,1555.5 814.6,1549.8 816.0,1551.9 818.1,1546.3 819.8,1547.7 822.0,1542.8 824.7,1553.3 826.5,1546.3 830.0,1547.0 831.8,1551.9 833.8,1553.3 835.2,1556.9 837.0,1552.6 838.4,1553.3 840.8,1559.7 842.2,1554.8 844.1,1568.8 845.5,1595.5 847.6,1569.5 849.0,1567.4 851.5,1557.6 853.2,1563.2 854.6,1570.2 856.0,1573.0 858.8,1606.0 860.9,1568.8 862.7,1564.6 864.4,1567.4 865.8,1564.6 867.5,1574.4 868.9,1571.6 870.7,1599.0 872.1,1599.0 875.0,1583.5 878.5,1596.9 880.8,1585.0 883.7,1606.0 885.5,1594.8 886.9,1591.3 889.7,1569.5 891.8,1568.8 893.2,1571.6 895.3,1582.8 897.4,1573.0 898.4,1574.4 901.2,1561.1 903.3,1575.8 905.1,1577.2 908.0,1585.0 910.1,1571.6 911.9,1594.1 913.6,1581.4 915.7,1580.0 917.8,1574.4 919.2,1573.0 921.7,1578.6 923.4,1564.6 924.8,1575.1 926.2,1573.0 927.9,1583.5 929.7,1572.3 931.1,1574.4 932.1,1580.0 933.9,1568.1 935.3,1577.2 938.2,1571.6 939.8,1552.6 941.7,1577.2 945.2,1669.2 946.6,1570.9 948.4,1669.2 949.8,1539.3 951.5,1669.2 994.7,1669.2 996.6,1552.6 998.2,1559.7 1001.0,1545.6 1002.4,1553.3 1004.1,1552.6 1005.5,1669.2 1007.1,1544.2 1008.8,1669.2 1009.9,1551.2 1012.3,1669.2 1021.4,1566.0 1023.1,1573.0 1024.2,1568.8 1026.0,1669.2 1027.7,1669.2 1029.1,1546.3 1031.2,1543.8 1033.3,1555.5 1035.5,1547.7 1038.3,1612.3 1039.2,1544.2 1040.7,1669.2 1042.1,1669.2 1043.5,1554.8 1047.4,1554.8 1050.2,1559.0 1052.7,1550.5 1054.1,1551.2 1057.2,1570.9 1058.6,1561.1 1060.0,1566.0 1061.4,1556.2 1062.8,1669.2 1064.5,1536.5 1065.9,1565.3 1068.5,1545.6 1070.3,1669.2 1072.7,1554.8 1074.4,1564.6 1076.2,1669.2 1078.0,1537.9 1079.3,1535.8 1080.8,1669.2 1082.2,1553.3 1084.6,1544.2 1087.8,1542.1 1090.2,1565.3 1091.2,1550.5 1092.6,1669.2 1094.0,1554.8 1095.1,1580.0 1096.6,1547.7 1098.4,1542.1 1100.8,1549.8 1102.9,1552.6 1104.3,1669.2 1106.8,1554.1 1108.8,1669.2 1110.6,1540.0 1111.7,1539.3 1113.4,1669.2 1115.5,1540.0 1116.9,1539.3 1119.0,1551.9 1120.7,1669.2 1122.8,1669.2 1124.6,1549.1 1126.0,1669.2 1127.9,1547.7 1129.6,1544.2 1131.0,1547.7 1132.4,1669.2 1133.8,1545.6 1135.6,1549.8 1137.0,1568.8 1138.1,1623.6 1139.7,1551.2 1142.9,1552.6 1145.4,1669.2 1147.1,1539.3 1148.5,1549.1 1150.2,1669.2 1151.7,1669.2 1153.2,1540.7 1154.6,1551.9 1156.2,1536.5 1157.9,1547.7 1159.5,1669.2 1159.5,1670" fill="#f7e1cd"/><line x1="660.9" y1="1536" x2="1159.5" y2="1536" stroke="#000" stroke-opacity="0.07" stroke-width="1"/><line x1="660.9" y1="1569.5" x2="1159.5" y2="1569.5" stroke="#000" stroke-opacity="0.07" stroke-width="1"/><line x1="660.9" y1="1603" x2="1159.5" y2="1603" stroke="#000" stroke-opacity="0.07" stroke-width="1"/><line x1="660.9" y1="1636.5" x2="1159.5" y2="1636.5" stroke="#000" stroke-opacity="0.07" stroke-width="1"/><line x1="660.9" y1="1670" x2="1159.5" y2="1670" stroke="#000" stroke-opacity="0.07" stroke-width="1"/><polyline points="660.9,1590.6 662.6,1540.7 664.1,1555.5 665.4,1550.5 666.8,1669.9 668.3,1550.5 670.0,1540.7 671.7,1573.0 673.1,1559.7 674.5,1669.9 676.1,1550.5 677.8,1566.0 679.2,1669.9 680.6,1547.7 683.0,1669.9 684.8,1542.1 686.9,1553.3 689.0,1545.6 690.4,1551.9 692.2,1669.9 693.9,1546.3 695.3,1542.8 697.0,1669.9 698.4,1542.8 700.2,1536.5 701.6,1669.9 703.0,1546.3 704.4,1546.3 705.9,1544.2 707.3,1553.3 708.9,1669.9 710.5,1536.5 712.2,1540.0 713.3,1669.9 715.0,1540.7 716.7,1669.9 718.1,1550.5 719.5,1545.6 721.3,1548.4 722.4,1559.0 724.1,1669.9 725.1,1544.2 726.5,1616.6 727.9,1544.2 729.7,1669.9 731.1,1542.1 732.5,1544.2 733.9,1551.9 735.8,1544.2 737.4,1548.4 738.9,1669.9 740.3,1550.5 741.7,1669.9 743.3,1566.0 744.8,1567.4 746.2,1571.6 748.0,1669.9 750.8,1669.9 752.2,1550.5 753.9,1549.1 755.3,1669.9 756.8,1541.4 758.5,1563.2 759.9,1545.6 761.6,1669.9 763.0,1550.5 764.8,1669.9 766.2,1567.4 767.7,1557.6 769.1,1556.9 771.9,1545.6 773.7,1559.7 775.4,1535.1 777.1,1542.8 778.9,1550.5 780.3,1636.2 782.0,1549.1 784.5,1542.1 787.7,1539.3 789.7,1555.5 791.2,1542.1 792.9,1559.7 797.0,1563.2 798.7,1565.3 800.5,1669.2 802.6,1669.2 804.0,1548.4 805.1,1554.8 807.1,1549.1 809.4,1545.6 811.0,1547.7 812.9,1555.5 814.6,1549.8 816.0,1551.9 818.1,1546.3 819.8,1547.7 822.0,1542.8 824.7,1553.3 826.5,1546.3 830.0,1547.0 831.8,1551.9 833.8,1553.3 835.2,1556.9 837.0,1552.6 838.4,1553.3 840.8,1559.7 842.2,1554.8 844.1,1568.8 845.5,1595.5 847.6,1569.5 849.0,1567.4 851.5,1557.6 853.2,1563.2 854.6,1570.2 856.0,1573.0 858.8,1606.0 860.9,1568.8 862.7,1564.6 864.4,1567.4 865.8,1564.6 867.5,1574.4 868.9,1571.6 870.7,1599.0 872.1,1599.0 875.0,1583.5 878.5,1596.9 880.8,1585.0 883.7,1606.0 885.5,1594.8 886.9,1591.3 889.7,1569.5 891.8,1568.8 893.2,1571.6 895.3,1582.8 897.4,1573.0 898.4,1574.4 901.2,1561.1 903.3,1575.8 905.1,1577.2 908.0,1585.0 910.1,1571.6 911.9,1594.1 913.6,1581.4 915.7,1580.0 917.8,1574.4 919.2,1573.0 921.7,1578.6 923.4,1564.6 924.8,1575.1 926.2,1573.0 927.9,1583.5 929.7,1572.3 931.1,1574.4 932.1,1580.0 933.9,1568.1 935.3,1577.2 938.2,1571.6 939.8,1552.6 941.7,1577.2 945.2,1669.2 946.6,1570.9 948.4,1669.2 949.8,1539.3 951.5,1669.2 994.7,1669.2 996.6,1552.6 998.2,1559.7 1001.0,1545.6 1002.4,1553.3 1004.1,1552.6 1005.5,1669.2 1007.1,1544.2 1008.8,1669.2 1009.9,1551.2 1012.3,1669.2 1021.4,1566.0 1023.1,1573.0 1024.2,1568.8 1026.0,1669.2 1027.7,1669.2 1029.1,1546.3 1031.2,1543.8 1033.3,1555.5 1035.5,1547.7 1038.3,1612.3 1039.2,1544.2 1040.7,1669.2 1042.1,1669.2 1043.5,1554.8 1047.4,1554.8 1050.2,1559.0 1052.7,1550.5 1054.1,1551.2 1057.2,1570.9 1058.6,1561.1 1060.0,1566.0 1061.4,1556.2 1062.8,1669.2 1064.5,1536.5 1065.9,1565.3 1068.5,1545.6 1070.3,1669.2 1072.7,1554.8 1074.4,1564.6 1076.2,1669.2 1078.0,1537.9 1079.3,1535.8 1080.8,1669.2 1082.2,1553.3 1084.6,1544.2 1087.8,1542.1 1090.2,1565.3 1091.2,1550.5 1092.6,1669.2 1094.0,1554.8 1095.1,1580.0 1096.6,1547.7 1098.4,1542.1 1100.8,1549.8 1102.9,1552.6 1104.3,1669.2 1106.8,1554.1 1108.8,1669.2 1110.6,1540.0 1111.7,1539.3 1113.4,1669.2 1115.5,1540.0 1116.9,1539.3 1119.0,1551.9 1120.7,1669.2 1122.8,1669.2 1124.6,1549.1 1126.0,1669.2 1127.9,1547.7 1129.6,1544.2 1131.0,1547.7 1132.4,1669.2 1133.8,1545.6 1135.6,1549.8 1137.0,1568.8 1138.1,1623.6 1139.7,1551.2 1142.9,1552.6 1145.4,1669.2 1147.1,1539.3 1148.5,1549.1 1150.2,1669.2 1151.7,1669.2 1153.2,1540.7 1154.6,1551.9 1156.2,1536.5 1157.9,1547.7 1159.5,1669.2" fill="none" stroke="#d4700e" stroke-width="2" stroke-linejoin="round"/><line x1="656.5" y1="1529" x2="656.5" y2="1670" stroke="#b5c4d2" stroke-width="1"/><line x1="651.5" y1="1670" x2="1165" y2="1670" stroke="#b5c4d2" stroke-width="1"/><line x1="660.9" y1="1670" x2="660.9" y2="1674" stroke="#b5c4d2" stroke-width="1"/><text x="648" y="1539.6" font-size="10" font-weight="bold" text-anchor="end" fill="#c27414" textLength="15.2" lengthAdjust="spacingAndGlyphs">80</text><text x="648" y="1573.1" font-size="10" font-weight="bold" text-anchor="end" fill="#c27414" textLength="15.2" lengthAdjust="spacingAndGlyphs">60</text><text x="648" y="1606.6" font-size="10" font-weight="bold" text-anchor="end" fill="#c27414" textLength="15.2" lengthAdjust="spacingAndGlyphs">40</text><text x="648" y="1640.1" font-size="10" font-weight="bold" text-anchor="end" fill="#c27414" textLength="15.2" lengthAdjust="spacingAndGlyphs">20</text><text x="648" y="1673.6" font-size="10" font-weight="bold" text-anchor="end" fill="#c27414" textLength="7.6" lengthAdjust="spacingAndGlyphs">0</text><text transform="translate(618,1599) rotate(-90)" font-size="11" font-weight="bold" text-anchor="middle" fill="#c27414" textLength="103" lengthAdjust="spacingAndGlyphs">自行车踏频 (rpm)</text><text x="755.5" y="1681.5" font-size="10" font-weight="bold" fill="#2b2b2b" textLength="55.0" lengthAdjust="spacingAndGlyphs">01:23:20</text><text x="877.5" y="1681.5" font-size="10" font-weight="bold" fill="#2b2b2b" textLength="55.0" lengthAdjust="spacingAndGlyphs">02:46:40</text><text x="999.5" y="1681.5" font-size="10" font-weight="bold" fill="#2b2b2b" textLength="55.0" lengthAdjust="spacingAndGlyphs">04:10:00</text><text x="1121.5" y="1681.5" font-size="10" font-weight="bold" fill="#2b2b2b" textLength="55.0" lengthAdjust="spacingAndGlyphs">05:33:20</text></svg>
<div class="dd" style="left:846px;top:1687px">时间<small>(h:m:s)</small><u></u></div>
<div class="tri s" style="left:604px;top:1733px"></div>
<svg class="abs" style="left:624px;top:1729px" width="16" height="16" viewBox="0 0 16 16"><path d="M5 10.500 L12.500 3" stroke="#c9c9c9" stroke-width="4.400" stroke-linecap="round"/><path d="M5 10.500 L12.500 3" stroke="#f4efee" stroke-width="2.400" stroke-linecap="round"/><path d="M4.500 11 L9 6.500" stroke="#e46a4f" stroke-width="2.400" stroke-linecap="round"/><circle cx="4.600" cy="11.200" r="3.600" fill="#e46a4f" stroke="#c9553c" stroke-width="0.600"/></svg>
<div class="h2" style="left:648px;top:1727px">温度</div>
<div class="exp" style="left:1155px;top:1727px"></div>
<svg class="abs" style="left:1155px;top:1727px" width="21" height="22" viewBox="0 0 21 22"><path d="M10.900 4.200 H16.800 V10.100 Z M3.800 11 V16.800 H9.600 Z" fill="#5a5a5a"/><path d="M15.300 5.700 L11.300 9.700 M5.200 15.400 L9.200 11.400" stroke="#5a5a5a" stroke-width="2.200"/></svg>
<div class="cbox" style="left:596px;top:1755px"></div>
<svg class="abs" style="left:597px;top:1756px" width="577" height="202" viewBox="597 1756 577 202"><line x1="651.5" y1="1782" x2="1165" y2="1782" stroke="#e4e6e8" stroke-width="1"/><line x1="651.5" y1="1827.5" x2="1165" y2="1827.5" stroke="#e4e6e8" stroke-width="1"/><line x1="651.5" y1="1873" x2="1165" y2="1873" stroke="#e4e6e8" stroke-width="1"/><line x1="651.5" y1="1918" x2="1165" y2="1918" stroke="#e4e6e8" stroke-width="1"/><polygon points="661.2,1918 661.2,1822.7 664.2,1831.3 665.0,1831.3 668.3,1840.4 669.0,1840.4 671.3,1845.4 675.4,1845.4 678.1,1849.9 754.8,1849.9 757.5,1845.4 788.0,1845.4 790.1,1840.8 802.7,1840.8 805.1,1836.3 809.8,1836.3 811.9,1840.8 813.9,1840.8 815.9,1845.4 837.7,1845.4 839.8,1840.8 851.2,1840.8 853.6,1836.3 879.1,1836.3 880.8,1840.8 885.8,1840.8 888.0,1845.4 922.9,1845.4 925.0,1849.9 932.2,1849.9 933.9,1854.4 936.4,1854.4 938.1,1859.0 945.5,1863.5 963.8,1863.5 965.9,1859.0 974.3,1859.0 976.0,1854.4 981.9,1854.4 983.6,1849.9 989.7,1849.9 991.4,1845.4 998.1,1845.4 1000.2,1840.8 1011.4,1840.8 1019.2,1849.9 1033.3,1849.9 1035.0,1854.4 1041.7,1854.4 1043.8,1859.0 1061.3,1859.0 1063.4,1863.5 1108.7,1863.5 1110.8,1868.0 1118.8,1868.0 1120.9,1863.5 1158.9,1863.5 1158.9,1918" fill="#cbcbcb"/><line x1="661.2" y1="1782" x2="1158.9" y2="1782" stroke="#000" stroke-opacity="0.07" stroke-width="1"/><line x1="661.2" y1="1827.5" x2="1158.9" y2="1827.5" stroke="#000" stroke-opacity="0.07" stroke-width="1"/><line x1="661.2" y1="1873" x2="1158.9" y2="1873" stroke="#000" stroke-opacity="0.07" stroke-width="1"/><line x1="661.2" y1="1918" x2="1158.9" y2="1918" stroke="#000" stroke-opacity="0.07" stroke-width="1"/><polyline points="661.2,1822.7 664.2,1831.3 665.0,1831.3 668.3,1840.4 669.0,1840.4 671.3,1845.4 675.4,1845.4 678.1,1849.9 754.8,1849.9 757.5,1845.4 788.0,1845.4 790.1,1840.8 802.7,1840.8 805.1,1836.3 809.8,1836.3 811.9,1840.8 813.9,1840.8 815.9,1845.4 837.7,1845.4 839.8,1840.8 851.2,1840.8 853.6,1836.3 879.1,1836.3 880.8,1840.8 885.8,1840.8 888.0,1845.4 922.9,1845.4 925.0,1849.9 932.2,1849.9 933.9,1854.4 936.4,1854.4 938.1,1859.0 945.5,1863.5 963.8,1863.5 965.9,1859.0 974.3,1859.0 976.0,1854.4 981.9,1854.4 983.6,1849.9 989.7,1849.9 991.4,1845.4 998.1,1845.4 1000.2,1840.8 1011.4,1840.8 1019.2,1849.9 1033.3,1849.9 1035.0,1854.4 1041.7,1854.4 1043.8,1859.0 1061.3,1859.0 1063.4,1863.5 1108.7,1863.5 1110.8,1868.0 1118.8,1868.0 1120.9,1863.5 1158.9,1863.5" fill="none" stroke="#000" stroke-width="2" stroke-linejoin="round"/><line x1="656.5" y1="1776" x2="656.5" y2="1918" stroke="#b5c4d2" stroke-width="1"/><line x1="651.5" y1="1918" x2="1165" y2="1918" stroke="#b5c4d2" stroke-width="1"/><line x1="661.2" y1="1918" x2="661.2" y2="1922" stroke="#b5c4d2" stroke-width="1"/><text x="648" y="1785.6" font-size="10" font-weight="bold" text-anchor="end" fill="#1a1a1a" textLength="15.2" lengthAdjust="spacingAndGlyphs">30</text><text x="648" y="1831.1" font-size="10" font-weight="bold" text-anchor="end" fill="#1a1a1a" textLength="15.2" lengthAdjust="spacingAndGlyphs">20</text><text x="648" y="1876.6" font-size="10" font-weight="bold" text-anchor="end" fill="#1a1a1a" textLength="15.2" lengthAdjust="spacingAndGlyphs">10</text><text x="648" y="1921.6" font-size="10" font-weight="bold" text-anchor="end" fill="#1a1a1a" textLength="7.6" lengthAdjust="spacingAndGlyphs">0</text><text transform="translate(619,1848) rotate(-90)" font-size="11" font-weight="bold" text-anchor="middle" fill="#1a1a1a" textLength="52" lengthAdjust="spacingAndGlyphs">温度 (°C)</text><text x="755.5" y="1929.5" font-size="10" font-weight="bold" fill="#2b2b2b" textLength="55.0" lengthAdjust="spacingAndGlyphs">01:23:20</text><text x="877.5" y="1929.5" font-size="10" font-weight="bold" fill="#2b2b2b" textLength="55.0" lengthAdjust="spacingAndGlyphs">02:46:40</text><text x="999.5" y="1929.5" font-size="10" font-weight="bold" fill="#2b2b2b" textLength="55.0" lengthAdjust="spacingAndGlyphs">04:10:00</text><text x="1121.5" y="1929.5" font-size="10" font-weight="bold" fill="#2b2b2b" textLength="55.0" lengthAdjust="spacingAndGlyphs">05:33:20</text></svg>
<div class="dd" style="left:846px;top:1935px">时间<small>(h:m:s)</small><u></u></div>
<div class="abs" style="left:100px;top:2006px;width:1220px;height:100px;background:linear-gradient(90deg,rgba(247,251,251,0),rgba(247,251,251,1) 12%,rgba(247,251,251,1) 88%,rgba(247,251,251,0));-webkit-mask-image:linear-gradient(#000 85%,transparent);mask-image:linear-gradient(#000 85%,transparent)"></div>
<div class="abs" style="left:100px;top:2006px;width:1220px;height:5px;background:linear-gradient(rgba(0,0,0,0.10),rgba(0,0,0,0));-webkit-mask-image:linear-gradient(90deg,transparent,#000 12%,#000 88%,transparent);mask-image:linear-gradient(90deg,transparent,#000 12%,#000 88%,transparent)"></div>
<div class="ft" style="left:233px;top:2020px;font-weight:bold;font-size:12px;letter-spacing:0.9px;color:#777">辅助说明</div>
<div class="ft" style="left:233px;top:2042px;font-size:12px;color:#777">快速上手</div>
<div class="ft" style="left:233px;top:2064px;font-size:12px;color:#777">最新信息</div>
<div class="ft" style="left:433px;top:2021px;font-weight:bold;font-size:11px;color:#8a8a8a">Garmin Connect</div>
<div class="ft" style="left:433px;top:2042px;font-size:12px;color:#777">博客</div>
<div class="ft" style="left:433px;top:2064px;font-size:12px;color:#777">开发人员</div>
<div class="ft" style="left:633px;top:2021px;font-weight:bold;font-size:11px;color:#8a8a8a">Garmin</div>
<div class="ft" style="left:633px;top:2042px;font-size:12px;color:#777">健身产品</div>
<div class="ft" style="left:633px;top:2064px;font-size:12px;color:#777">技术支持</div>
<div class="ft" style="right:241px;top:2020px;font-size:12px;color:#777">隐私权政策 <span style="color:#aaa">|</span> 使用条款</div>
<div class="ft" style="right:241px;top:2042px;font-size:12px;color:#777">版权所有 <span style="font-size:10.5px;color:#888">© 1996-2012 Garmin Ltd.</span> 或其子公司</div>
<svg class="abs" style="left:1067px;top:2070px" width="118" height="36" viewBox="0 0 118 36">
<rect x="0" y="1" width="33" height="33" rx="3" fill="#78be43"/>
<path d="M5 19 A11.500 11.500 0 0 1 28 19" fill="none" stroke="#1a1a1a" stroke-width="3.200"/>
<circle cx="16.500" cy="20" r="6.600" fill="none" stroke="#fff" stroke-width="2.600"/><rect x="16.500" y="19" width="8" height="2.400" fill="#fff"/><rect x="19" y="21.400" width="6" height="4.500" fill="#78be43"/>
<text x="35" y="17" font-size="14" font-weight="bold" fill="#111" textLength="59" lengthAdjust="spacingAndGlyphs" style="font-family:'Liberation Sans',sans-serif">TRUSTe</text>
<text x="35" y="26" font-size="7" fill="#78be43" textLength="78" lengthAdjust="spacingAndGlyphs" style="font-family:'Liberation Sans',sans-serif">EU SAFE HARBOR</text>
</svg>
<svg class="abs" style="left:1150px;top:2100px" width="270" height="34" viewBox="0 0 270 34"><text x="10" y="28" font-size="26" font-weight="bold" fill="#cbcbcb" stroke="#cbcbcb" stroke-width="0.7" textLength="258" lengthAdjust="spacingAndGlyphs" transform="translate(0,0)" style="font-family:'Liberation Sans',sans-serif">http://www.fengyunbike.com</text></svg>
<div class="abs" style="left:1420px;top:0;width:2px;height:2135px;background:#000"></div>
<div class="abs" style="left:0;top:2133px;width:1424px;height:2px;background:#000"></div>
</div>
</body>
</html>
